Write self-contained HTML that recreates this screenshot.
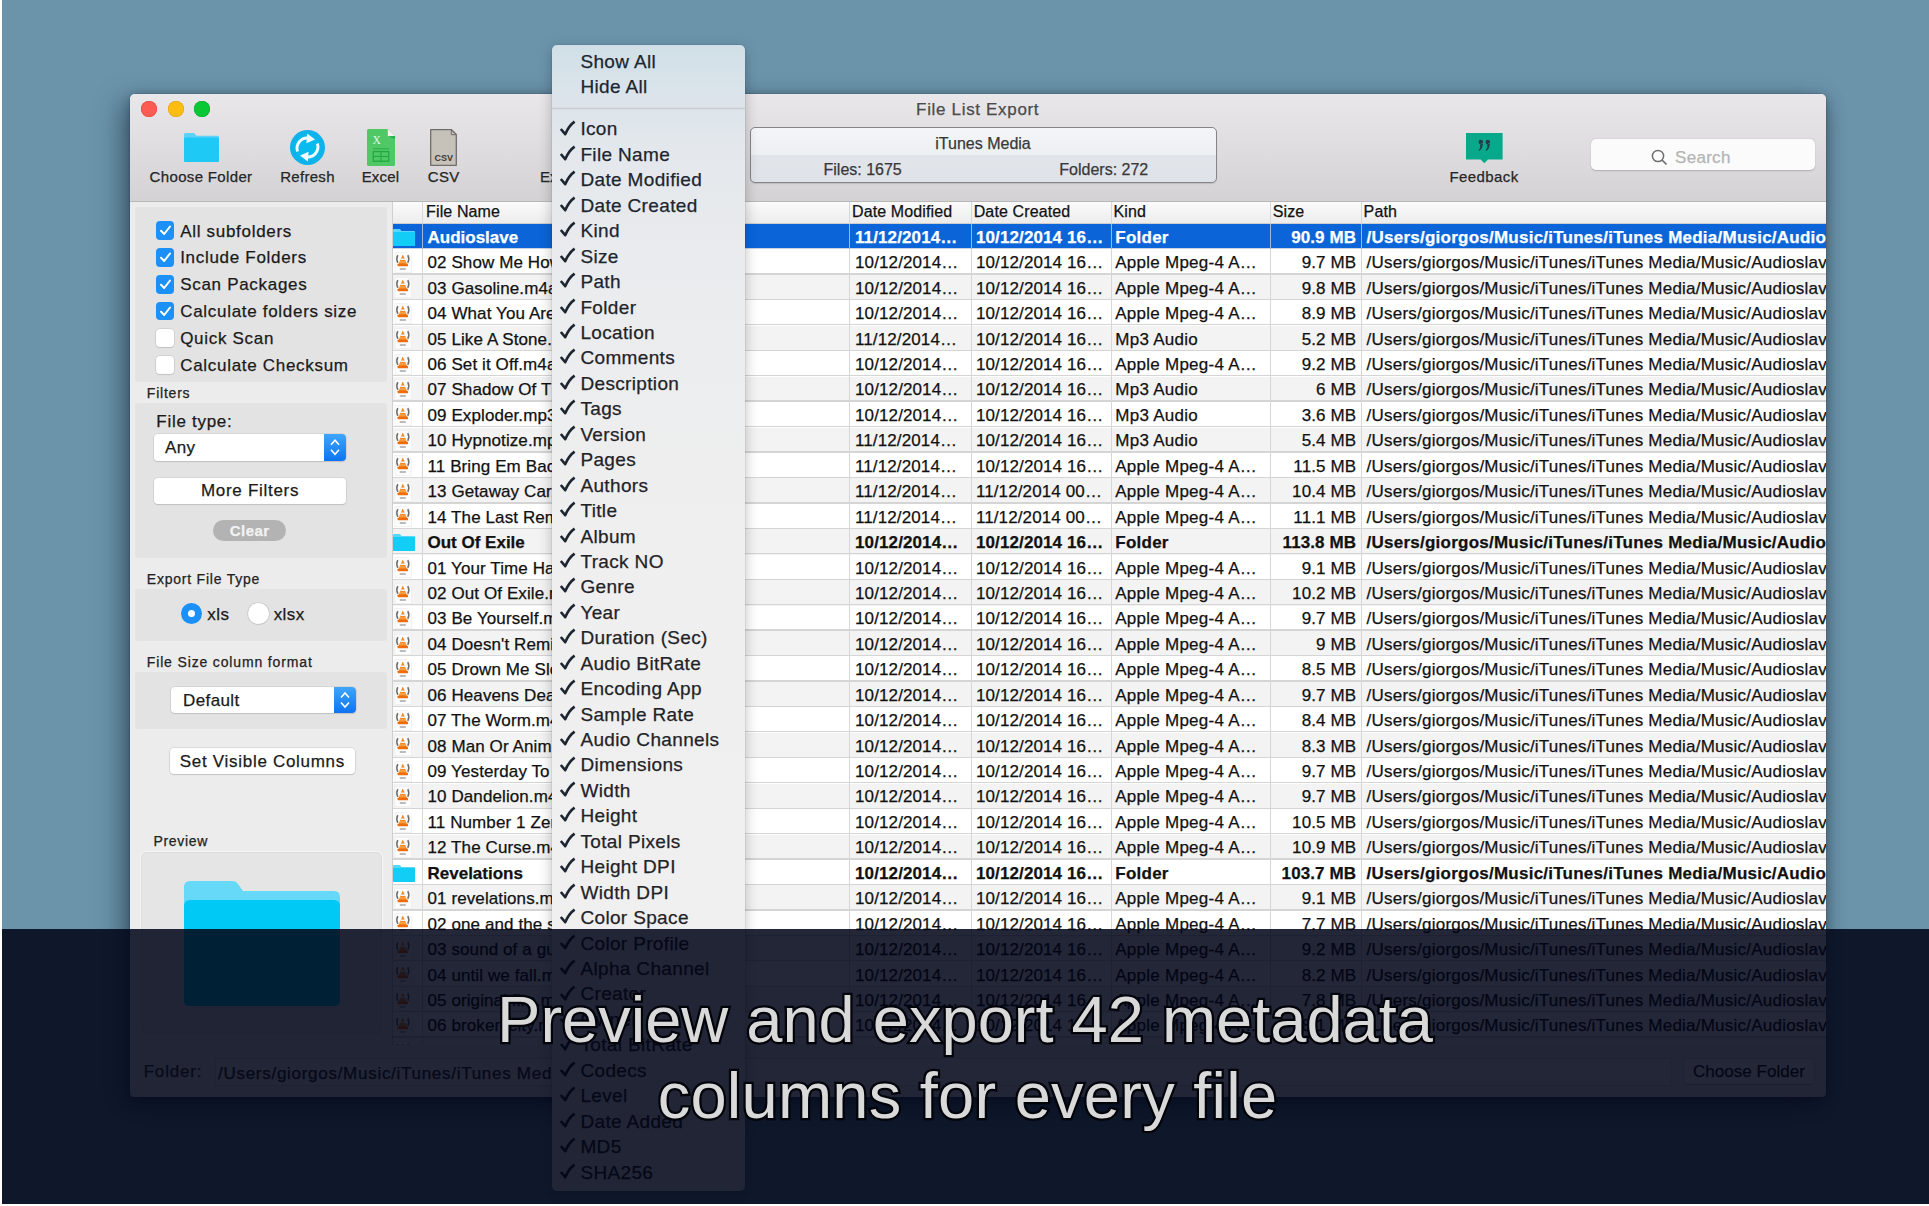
<!DOCTYPE html><html><head><meta charset="utf-8"><style>
*{margin:0;padding:0;box-sizing:border-box}
html,body{width:1929px;height:1206px;overflow:hidden;background:#6b94ab;font-family:"Liberation Sans", sans-serif;}
.a{position:absolute}
.t{position:absolute;white-space:pre;font-family:"Liberation Sans", sans-serif;-webkit-text-stroke:0.25px currentColor}
svg{position:absolute;overflow:visible}
</style></head><body><div class="a" style="left:130px;top:94px;width:1696px;height:1003px;background:#ececec;border-radius:5px 5px 4px 4px;box-shadow:0 0 0 0.5px rgba(40,60,80,.35),-10px 8px 28px rgba(20,40,60,.38), 0 2px 10px rgba(0,0,0,.22), 0 10px 22px rgba(0,0,0,.25);"></div>
<div class="a" style="left:130px;top:94px;width:1696px;height:108px;border-radius:5px 5px 0 0;background:linear-gradient(#e9e7e9,#d4d2d4);border-bottom:1px solid #b9b7b9;"></div>
<div class="a" style="left:140.7px;top:100.5px;width:16px;height:16px;border-radius:50%;background:#fd5c55;box-shadow:inset 0 0 0 0.5px #e0443e;"></div>
<div class="a" style="left:167.7px;top:100.5px;width:16px;height:16px;border-radius:50%;background:#fdbd10;box-shadow:inset 0 0 0 0.5px #dea123;"></div>
<div class="a" style="left:194.2px;top:100.5px;width:16px;height:16px;border-radius:50%;background:#08c835;box-shadow:inset 0 0 0 0.5px #0aa82a;"></div>
<div class="t" style="left:977.7px;top:101.01px;font-size:17px;line-height:17px;color:#4b4b4b;letter-spacing:0.67px;transform:translateX(-50%);">File List Export</div>
<svg style="left:183px;top:132px" width="37" height="31" viewBox="0 0 37 31"><path d="M1 2.5 Q1 1 2.5 1 H11 L13.5 3.8 H34.5 Q36 3.8 36 5.3 V28.5 Q36 30 34.5 30 H2.5 Q1 30 1 28.5 Z" fill="#5ad3f7"/><path d="M1 7 Q1 5.5 2.5 5.5 H34.5 Q36 5.5 36 7 V28.5 Q36 30 34.5 30 H2.5 Q1 30 1 28.5 Z" fill="#1ec9f5"/></svg>
<div class="t" style="left:201px;top:169.20px;font-size:15px;line-height:15px;color:#262626;letter-spacing:0.34px;transform:translateX(-50%);">Choose Folder</div>
<svg style="left:290px;top:130px" width="35" height="35" viewBox="0 0 35 35"><circle cx="17.5" cy="17.5" r="17.5" fill="#0fb2ea"/><circle cx="17.5" cy="17.5" r="13" fill="#08bbef"/><path d="M7.6 21.5 A10.3 10.3 0 0 1 18.5 8" stroke="#effbfe" stroke-width="2.9" fill="none"/><path d="M17.2 3.6 L25 9.4 L16.4 13.2 Z" fill="#effbfe"/><path d="M27.4 13.5 A10.3 10.3 0 0 1 16.5 27" stroke="#effbfe" stroke-width="2.9" fill="none"/><path d="M17.8 31.4 L10 25.6 L18.6 21.8 Z" fill="#effbfe"/></svg>
<div class="t" style="left:307.5px;top:169.20px;font-size:15px;line-height:15px;color:#262626;letter-spacing:0.29px;transform:translateX(-50%);">Refresh</div>
<svg style="left:367px;top:129.2px" width="28" height="37" viewBox="0 0 28 37"><path d="M1.5 0 H20.8 L28 7.3 V35.5 Q28 37 26.5 37 H1.5 Q0 37 0 35.5 V1.5 Q0 0 1.5 0Z" fill="#50c865"/><path d="M20.8 0 L28 7.3 H20.8Z" fill="#f2f2f2"/><path d="M20.8 7.3 H28 V9.8Z" fill="#1fa843"/><text x="5.5" y="15" font-family="Liberation Serif" font-size="11.5" fill="#e4f6e6">X</text><rect x="6" y="19.2" width="16" height="1.1" fill="#2fae4a"/><rect x="6.3" y="22.6" width="15.4" height="9.6" fill="none" stroke="#22a83f" stroke-width="1.3"/><rect x="13.5" y="22.6" width="1.1" height="9.6" fill="#22a83f"/><rect x="6.3" y="26.9" width="15.4" height="1.1" fill="#22a83f"/></svg>
<div class="t" style="left:380.5px;top:169.20px;font-size:15px;line-height:15px;color:#262626;letter-spacing:0.2px;transform:translateX(-50%);">Excel</div>
<svg style="left:430px;top:129.2px" width="27" height="37" viewBox="0 0 27 37"><path d="M0.7 0.7 H21.5 L26.3 5.5 V36.3 H0.7Z" fill="#c6c1b9" stroke="#6f6d6a" stroke-width="1.3" stroke-linejoin="round"/><path d="M21.3 0.9 V5.7 H26.1" fill="none" stroke="#6f6d6a" stroke-width="1"/><text x="13.7" y="32" text-anchor="middle" font-family="Liberation Sans" font-weight="bold" font-size="9" fill="#3c3b39">CSV</text></svg>
<div class="t" style="left:443.7px;top:169.20px;font-size:15px;line-height:15px;color:#262626;letter-spacing:0.3px;transform:translateX(-50%);">CSV</div>
<div class="t" style="left:540px;top:169.20px;font-size:15px;line-height:15px;color:#262626;">Ex</div>
<div class="a" style="left:750px;top:126.5px;width:467px;height:56.8px;border-radius:5px;border:1.3px solid #858587;background:linear-gradient(#f3f5f7 0%,#edf0f3 50%,#e1e5ea 51%,#dfe3e9 100%);box-shadow:0 1px 1px rgba(0,0,0,.12);"></div>
<div class="t" style="left:983px;top:135.56px;font-size:16px;line-height:16px;color:#383838;transform:translateX(-50%);">iTunes Media</div>
<div class="t" style="left:823.5px;top:162.46px;font-size:16px;line-height:16px;color:#383838;">Files: 1675</div>
<div class="t" style="left:1059.3px;top:162.46px;font-size:16px;line-height:16px;color:#383838;">Folders: 272</div>
<svg style="left:1465.6px;top:132.8px" width="37" height="31" viewBox="0 0 37 31"><path d="M0 0 H36.6 V26.5 H22 L18.3 30.3 L14.6 26.5 H0Z" fill="#08a98a"/><path d="M14.8 9 m-2.3 0 a2.3 2.3 0 1 0 4.6 0 a2.3 2.3 0 1 0 -4.6 0 M17 9.5 Q17 15.5 13.2 18 L12.6 17.3 Q14.8 14.8 14.3 11.2Z" fill="#1d3e4a"/><path d="M21.8 9 m-2.3 0 a2.3 2.3 0 1 0 4.6 0 a2.3 2.3 0 1 0 -4.6 0 M24 9.5 Q24 15.5 20.2 18 L19.6 17.3 Q21.8 14.8 21.3 11.2Z" fill="#1d3e4a"/></svg>
<div class="t" style="left:1484px;top:169.40px;font-size:15px;line-height:15px;color:#262626;letter-spacing:0.42px;transform:translateX(-50%);">Feedback</div>
<div class="a" style="left:1591px;top:139.3px;width:224px;height:31px;border-radius:5px;background:#fbfbfb;box-shadow:0 0.5px 1.5px rgba(0,0,0,.2);"></div>
<svg style="left:1650.5px;top:149px" width="18" height="18" viewBox="0 0 18 18"><circle cx="7" cy="7" r="5.6" stroke="#6e6e6e" stroke-width="1.5" fill="none"/><path d="M11 11 L15.5 15.5" stroke="#6e6e6e" stroke-width="1.7"/></svg>
<div class="t" style="left:1675px;top:148.61px;font-size:17px;line-height:17px;color:#b4b4b4;letter-spacing:0.3px;">Search</div>
<div class="a" style="left:135.4px;top:207px;width:251.2px;height:174.6px;background:#e3e3e3;border-radius:3px;"></div>
<div class="a" style="left:135.4px;top:402.5px;width:251.2px;height:155.5px;background:#e3e3e3;border-radius:3px;"></div>
<div class="a" style="left:135.4px;top:589px;width:251.2px;height:52px;background:#e3e3e3;border-radius:3px;"></div>
<div class="a" style="left:135.4px;top:671.7px;width:251.2px;height:57px;background:#e3e3e3;border-radius:3px;"></div>
<div class="a" style="left:155.5px;top:221.3px;width:18.6px;height:18.6px;border-radius:4px;background:#1a90f8;"></div>
<svg style="left:155.5px;top:221.3px" width="19" height="19" viewBox="0 0 19 19"><path d="M5 9.8 L8.2 13 L14 5.5" stroke="#fff" stroke-width="2" fill="none" stroke-linecap="round" stroke-linejoin="round"/></svg>
<div class="t" style="left:180.2px;top:222.51px;font-size:17px;line-height:17px;color:#1a1a1a;letter-spacing:0.7px;">All subfolders</div>
<div class="a" style="left:155.5px;top:248.14000000000001px;width:18.6px;height:18.6px;border-radius:4px;background:#1a90f8;"></div>
<svg style="left:155.5px;top:248.14000000000001px" width="19" height="19" viewBox="0 0 19 19"><path d="M5 9.8 L8.2 13 L14 5.5" stroke="#fff" stroke-width="2" fill="none" stroke-linecap="round" stroke-linejoin="round"/></svg>
<div class="t" style="left:180.2px;top:249.35px;font-size:17px;line-height:17px;color:#1a1a1a;letter-spacing:0.7px;">Include Folders</div>
<div class="a" style="left:155.5px;top:274.98px;width:18.6px;height:18.6px;border-radius:4px;background:#1a90f8;"></div>
<svg style="left:155.5px;top:274.98px" width="19" height="19" viewBox="0 0 19 19"><path d="M5 9.8 L8.2 13 L14 5.5" stroke="#fff" stroke-width="2" fill="none" stroke-linecap="round" stroke-linejoin="round"/></svg>
<div class="t" style="left:180.2px;top:276.19px;font-size:17px;line-height:17px;color:#1a1a1a;letter-spacing:0.7px;">Scan Packages</div>
<div class="a" style="left:155.5px;top:301.82px;width:18.6px;height:18.6px;border-radius:4px;background:#1a90f8;"></div>
<svg style="left:155.5px;top:301.82px" width="19" height="19" viewBox="0 0 19 19"><path d="M5 9.8 L8.2 13 L14 5.5" stroke="#fff" stroke-width="2" fill="none" stroke-linecap="round" stroke-linejoin="round"/></svg>
<div class="t" style="left:180.2px;top:303.03px;font-size:17px;line-height:17px;color:#1a1a1a;letter-spacing:0.7px;">Calculate folders size</div>
<div class="a" style="left:155.5px;top:328.66px;width:18.6px;height:18.6px;border-radius:4px;background:#fff;box-shadow:0 0 0 0.6px #c4c4c4, 0 0.6px 1px rgba(0,0,0,.15);"></div>
<div class="t" style="left:180.2px;top:329.87px;font-size:17px;line-height:17px;color:#1a1a1a;letter-spacing:0.7px;">Quick Scan</div>
<div class="a" style="left:155.5px;top:355.5px;width:18.6px;height:18.6px;border-radius:4px;background:#fff;box-shadow:0 0 0 0.6px #c4c4c4, 0 0.6px 1px rgba(0,0,0,.15);"></div>
<div class="t" style="left:180.2px;top:356.71px;font-size:17px;line-height:17px;color:#1a1a1a;letter-spacing:0.7px;">Calculate Checksum</div>
<div class="t" style="left:146.8px;top:385.85px;font-size:14px;line-height:14px;color:#222;letter-spacing:0.78px;">Filters</div>
<div class="t" style="left:156.3px;top:412.91px;font-size:17px;line-height:17px;color:#1a1a1a;letter-spacing:0.72px;">File type:</div>
<div class="a" style="left:154.1px;top:434.4px;width:191.9px;height:26.5px;border-radius:4px;background:#fff;box-shadow:0 0 0 0.6px #c8c8c8, 0 1px 1px rgba(0,0,0,.18);"></div>
<div class="a" style="left:324.0px;top:434.4px;width:22px;height:26.5px;border-radius:0 4px 4px 0;background:linear-gradient(#3ea6fa,#0d74f3);"></div>
<svg style="left:324.0px;top:434.4px" width="22" height="26.5" viewBox="0 0 22 26.5"><path d="M7 10.75 L11 6.25 L15 10.75" stroke="#fff" stroke-width="1.6" fill="none"/><path d="M7 15.75 L11 20.25 L15 15.75" stroke="#fff" stroke-width="1.6" fill="none"/></svg>
<div class="t" style="left:165px;top:439.41px;font-size:17px;line-height:17px;color:#1a1a1a;letter-spacing:0.4px;">Any</div>
<div class="a" style="left:154.1px;top:478.2px;width:191.9px;height:25.8px;border-radius:4px;background:#fff;box-shadow:0 0 0 0.6px #c8c8c8, 0 1px 1px rgba(0,0,0,.18);"></div>
<div class="t" style="left:250.05px;top:481.91px;font-size:17px;line-height:17px;color:#1a1a1a;letter-spacing:0.7px;transform:translateX(-50%);">More Filters</div>
<div class="a" style="left:213px;top:520px;width:73.3px;height:20.7px;border-radius:10.5px;background:#b3b3b3;"></div>
<div class="t" style="left:249.7px;top:522.80px;font-size:15px;line-height:15px;color:#f2f2f2;font-weight:bold;letter-spacing:0.45px;transform:translateX(-50%);">Clear</div>
<div class="t" style="left:146.8px;top:572.35px;font-size:14px;line-height:14px;color:#222;letter-spacing:0.78px;">Export File Type</div>
<div class="a" style="left:181px;top:603px;width:21px;height:21px;border-radius:50%;background:#1a90f8;"></div>
<div class="a" style="left:188px;top:610px;width:7px;height:7px;border-radius:50%;background:#fff;"></div>
<div class="t" style="left:207.2px;top:605.81px;font-size:17px;line-height:17px;color:#1a1a1a;letter-spacing:0.5px;">xls</div>
<div class="a" style="left:248.2px;top:603px;width:20.6px;height:20.6px;border-radius:50%;background:#fff;box-shadow:0 0 0 0.6px #c4c4c4, 0 0.6px 1px rgba(0,0,0,.15);"></div>
<div class="t" style="left:273.7px;top:605.81px;font-size:17px;line-height:17px;color:#1a1a1a;letter-spacing:0.4px;">xlsx</div>
<div class="t" style="left:146.8px;top:655.35px;font-size:14px;line-height:14px;color:#222;letter-spacing:0.85px;">File Size column format</div>
<div class="a" style="left:171.4px;top:686.7px;width:184.3px;height:26px;border-radius:4px;background:#fff;box-shadow:0 0 0 0.6px #c8c8c8, 0 1px 1px rgba(0,0,0,.18);"></div>
<div class="a" style="left:333.70000000000005px;top:686.7px;width:22px;height:26px;border-radius:0 4px 4px 0;background:linear-gradient(#3ea6fa,#0d74f3);"></div>
<svg style="left:333.70000000000005px;top:686.7px" width="22" height="26" viewBox="0 0 22 26"><path d="M7 10.5 L11 6.0 L15 10.5" stroke="#fff" stroke-width="1.6" fill="none"/><path d="M7 15.5 L11 20.0 L15 15.5" stroke="#fff" stroke-width="1.6" fill="none"/></svg>
<div class="t" style="left:183px;top:691.61px;font-size:17px;line-height:17px;color:#1a1a1a;letter-spacing:0.4px;">Default</div>
<div class="a" style="left:169.8px;top:747.8px;width:185.2px;height:25.8px;border-radius:4px;background:#fff;box-shadow:0 0 0 0.6px #c8c8c8, 0 1px 1px rgba(0,0,0,.18);"></div>
<div class="t" style="left:262.4px;top:752.51px;font-size:17px;line-height:17px;color:#1a1a1a;letter-spacing:0.7px;transform:translateX(-50%);">Set Visible Columns</div>
<div class="t" style="left:153.5px;top:834.45px;font-size:14px;line-height:14px;color:#222;letter-spacing:0.67px;">Preview</div>
<div class="a" style="left:140.6px;top:852px;width:241.2px;height:182px;border-radius:6px;background:#e5e5e5;box-shadow:0 0 0 1px #f6f6f6, inset 0 0 0 1px #dcdcdc;"></div>
<svg style="left:184px;top:881px" width="156" height="125" viewBox="0 0 156 125"><path d="M0 6 Q0 0 6 0 H48 Q52 0 54 3 L59 10 H150 Q156 10 156 16 V119 Q156 125 150 125 H6 Q0 125 0 119Z" fill="#66d9f8"/><path d="M0 25 Q0 19 6 19 H150 Q156 19 156 25 V119 Q156 125 150 125 H6 Q0 125 0 119Z" fill="#00c9f6"/></svg>
<div class="t" style="left:143.7px;top:1062.91px;font-size:17px;line-height:17px;color:#3a3a3a;letter-spacing:0.8px;">Folder:</div>
<div class="a" style="left:215.9px;top:1059px;width:1455px;height:25.5px;background:#f4f4f4;box-shadow:0 0 0 0.6px #c8c8c8;"></div>
<div class="t" style="left:218px;top:1065.31px;font-size:17px;line-height:17px;color:#2a2a2a;letter-spacing:0.72px;">/Users/giorgos/Music/iTunes/iTunes Media/Music/Audioslave</div>
<div class="a" style="left:1684px;top:1059px;width:130px;height:24.5px;border-radius:4px;background:#fff;box-shadow:0 0 0 0.6px #c8c8c8, 0 1px 1px rgba(0,0,0,.18);"></div>
<div class="t" style="left:1749px;top:1062.91px;font-size:17px;line-height:17px;color:#1a1a1a;letter-spacing:0.05px;transform:translateX(-50%);">Choose Folder</div>
<div class="a" style="left:391.6px;top:202px;width:1434.4px;height:843px;background:#fff;overflow:hidden;">
<div class="a" style="left:0px;top:0px;width:1434.4px;height:22px;background:linear-gradient(#fbfbfb,#ececec);border-bottom:1px solid #cdcdcd;"></div>
<div class="a" style="left:30.399999999999977px;top:0px;width:1px;height:22px;background:#d7d7d7;"></div>
<div class="a" style="left:457.9px;top:0px;width:1px;height:22px;background:#d7d7d7;"></div>
<div class="a" style="left:579.6px;top:0px;width:1px;height:22px;background:#d7d7d7;"></div>
<div class="a" style="left:719.4px;top:0px;width:1px;height:22px;background:#d7d7d7;"></div>
<div class="a" style="left:878.6999999999999px;top:0px;width:1px;height:22px;background:#d7d7d7;"></div>
<div class="a" style="left:969.4999999999999px;top:0px;width:1px;height:22px;background:#d7d7d7;"></div>
<div class="t" style="left:34.49999999999998px;top:2.26px;font-size:16px;line-height:16px;color:#111;letter-spacing:0.12px;">File Name</div>
<div class="t" style="left:460.4px;top:2.26px;font-size:16px;line-height:16px;color:#111;letter-spacing:0.12px;">Date Modified</div>
<div class="t" style="left:582.1px;top:2.26px;font-size:16px;line-height:16px;color:#111;letter-spacing:0.12px;">Date Created</div>
<div class="t" style="left:721.9px;top:2.26px;font-size:16px;line-height:16px;color:#111;letter-spacing:0.12px;">Kind</div>
<div class="t" style="left:881.1999999999999px;top:2.26px;font-size:16px;line-height:16px;color:#111;letter-spacing:0.12px;">Size</div>
<div class="t" style="left:971.9999999999999px;top:2.26px;font-size:16px;line-height:16px;color:#111;letter-spacing:0.12px;">Path</div>
<div class="a" style="left:0px;top:22.0px;width:1434.4px;height:25.44px;background:#0b65d9;"></div>
<div class="a" style="left:0px;top:45.839999999999996px;width:1434.4px;height:1.3px;background:#c9d3e0;"></div>
<div class="a" style="left:30.399999999999977px;top:22.0px;width:1px;height:25.44px;background:#9fb8dc;"></div>
<div class="a" style="left:457.9px;top:22.0px;width:1px;height:25.44px;background:#9fb8dc;"></div>
<div class="a" style="left:579.6px;top:22.0px;width:1px;height:25.44px;background:#9fb8dc;"></div>
<div class="a" style="left:719.4px;top:22.0px;width:1px;height:25.44px;background:#9fb8dc;"></div>
<div class="a" style="left:878.6999999999999px;top:22.0px;width:1px;height:25.44px;background:#9fb8dc;"></div>
<div class="a" style="left:969.4999999999999px;top:22.0px;width:1px;height:25.44px;background:#9fb8dc;"></div>
<svg style="left:1px;top:26.5px" width="22" height="17" viewBox="0 0 22 17"><path d="M0 1 Q0 0 1 0 H7 L8.5 2 H21 Q22 2 22 3 V16 Q22 17 21 17 H1 Q0 17 0 16Z" fill="#5ad6f8"/><path d="M0 4 Q0 3 1 3 H21 Q22 3 22 4 V16 Q22 17 21 17 H1 Q0 17 0 16Z" fill="#12cdf6"/></svg>
<div class="a" style="left:30.899999999999977px;top:22.0px;width:427.5px;height:25.44px;overflow:hidden"><div class="t" style="left:5px;top:4.81px;font-size:17px;line-height:17px;color:#fff;font-weight:bold;">Audioslave</div></div>
<div class="t" style="left:463.4px;top:26.81px;font-size:17px;line-height:17px;color:#fff;font-weight:bold;letter-spacing:0.12px;">11/12/2014…</div>
<div class="t" style="left:584.3000000000001px;top:26.81px;font-size:17px;line-height:17px;color:#fff;font-weight:bold;letter-spacing:0.12px;">10/12/2014 16…</div>
<div class="t" style="left:723.6999999999999px;top:26.81px;font-size:17px;line-height:17px;color:#fff;font-weight:bold;letter-spacing:0.25px;">Folder</div>
<div class="t" style="left:964.4999999999999px;top:26.81px;font-size:17px;line-height:17px;color:#fff;font-weight:bold;letter-spacing:0.1px;transform:translateX(-100%);">90.9 MB</div>
<div class="a" style="left:969.9999999999999px;top:22.0px;width:464.4000000000001px;height:25.44px;overflow:hidden"><div class="t" style="left:5px;top:4.81px;font-size:17px;line-height:17px;color:#fff;font-weight:bold;letter-spacing:0.24px;">/Users/giorgos/Music/iTunes/iTunes Media/Music/Audioslave</div></div>
<div class="a" style="left:0px;top:47.44px;width:1434.4px;height:25.44px;background:#ffffff;"></div>
<div class="a" style="left:0px;top:71.28px;width:1434.4px;height:1.3px;background:#d5d5d5;"></div>
<div class="a" style="left:30.399999999999977px;top:47.44px;width:1px;height:25.44px;background:#d6d6d6;"></div>
<div class="a" style="left:457.9px;top:47.44px;width:1px;height:25.44px;background:#d6d6d6;"></div>
<div class="a" style="left:579.6px;top:47.44px;width:1px;height:25.44px;background:#d6d6d6;"></div>
<div class="a" style="left:719.4px;top:47.44px;width:1px;height:25.44px;background:#d6d6d6;"></div>
<div class="a" style="left:878.6999999999999px;top:47.44px;width:1px;height:25.44px;background:#d6d6d6;"></div>
<div class="a" style="left:969.4999999999999px;top:47.44px;width:1px;height:25.44px;background:#d6d6d6;"></div>
<svg style="left:1.5px;top:49.94px" width="20" height="21" viewBox="0 0 20 21"><path d="M2 0.5 H14 L18.5 5 V20.5 H2Z" fill="#fcfcfc" stroke="#ececec" stroke-width="0.7"/><path d="M4.8 3.2 Q2.8 7 4.8 10.8" stroke="#6e6e6e" stroke-width="1.5" fill="none"/><path d="M14.8 3.2 Q16.8 7 14.8 10.8" stroke="#6e6e6e" stroke-width="1.5" fill="none"/><path d="M9.8 2.6 L14.2 12.6 H5.4Z" fill="#f7861c"/><rect x="4.6" y="11.8" width="10.4" height="2.4" rx="0.4" fill="#ef6c0c"/><path d="M7.9 6.6 H11.7 L12.3 8.1 H7.3Z" fill="#e9f6fb"/><path d="M6.9 9.4 H12.7 L13.2 10.5 H6.4Z" fill="#f9b36a"/><rect x="6.8" y="16.3" width="6" height="1.4" fill="#a0a0a0"/></svg>
<div class="a" style="left:30.899999999999977px;top:47.44px;width:427.5px;height:25.44px;overflow:hidden"><div class="t" style="left:5px;top:4.81px;font-size:17px;line-height:17px;color:#111;letter-spacing:0.1px;">02 Show Me How to Live.m4a</div></div>
<div class="t" style="left:463.4px;top:52.25px;font-size:17px;line-height:17px;color:#111;letter-spacing:0.12px;">10/12/2014…</div>
<div class="t" style="left:584.3000000000001px;top:52.25px;font-size:17px;line-height:17px;color:#111;letter-spacing:0.12px;">10/12/2014 16…</div>
<div class="t" style="left:723.6999999999999px;top:52.25px;font-size:17px;line-height:17px;color:#111;letter-spacing:0.25px;">Apple Mpeg-4 A…</div>
<div class="t" style="left:964.4999999999999px;top:52.25px;font-size:17px;line-height:17px;color:#111;letter-spacing:0.1px;transform:translateX(-100%);">9.7 MB</div>
<div class="a" style="left:969.9999999999999px;top:47.44px;width:464.4000000000001px;height:25.44px;overflow:hidden"><div class="t" style="left:5px;top:4.81px;font-size:17px;line-height:17px;color:#111;letter-spacing:0.23px;">/Users/giorgos/Music/iTunes/iTunes Media/Music/Audioslave/Audioslave/01.m4a</div></div>
<div class="a" style="left:0px;top:72.88px;width:1434.4px;height:25.44px;background:#f3f3f3;"></div>
<div class="a" style="left:0px;top:96.72px;width:1434.4px;height:1.3px;background:#d5d5d5;"></div>
<div class="a" style="left:30.399999999999977px;top:72.88px;width:1px;height:25.44px;background:#d6d6d6;"></div>
<div class="a" style="left:457.9px;top:72.88px;width:1px;height:25.44px;background:#d6d6d6;"></div>
<div class="a" style="left:579.6px;top:72.88px;width:1px;height:25.44px;background:#d6d6d6;"></div>
<div class="a" style="left:719.4px;top:72.88px;width:1px;height:25.44px;background:#d6d6d6;"></div>
<div class="a" style="left:878.6999999999999px;top:72.88px;width:1px;height:25.44px;background:#d6d6d6;"></div>
<div class="a" style="left:969.4999999999999px;top:72.88px;width:1px;height:25.44px;background:#d6d6d6;"></div>
<svg style="left:1.5px;top:75.38px" width="20" height="21" viewBox="0 0 20 21"><path d="M2 0.5 H14 L18.5 5 V20.5 H2Z" fill="#fcfcfc" stroke="#ececec" stroke-width="0.7"/><path d="M4.8 3.2 Q2.8 7 4.8 10.8" stroke="#6e6e6e" stroke-width="1.5" fill="none"/><path d="M14.8 3.2 Q16.8 7 14.8 10.8" stroke="#6e6e6e" stroke-width="1.5" fill="none"/><path d="M9.8 2.6 L14.2 12.6 H5.4Z" fill="#f7861c"/><rect x="4.6" y="11.8" width="10.4" height="2.4" rx="0.4" fill="#ef6c0c"/><path d="M7.9 6.6 H11.7 L12.3 8.1 H7.3Z" fill="#e9f6fb"/><path d="M6.9 9.4 H12.7 L13.2 10.5 H6.4Z" fill="#f9b36a"/><rect x="6.8" y="16.3" width="6" height="1.4" fill="#a0a0a0"/></svg>
<div class="a" style="left:30.899999999999977px;top:72.88px;width:427.5px;height:25.44px;overflow:hidden"><div class="t" style="left:5px;top:4.81px;font-size:17px;line-height:17px;color:#111;letter-spacing:0.1px;">03 Gasoline.m4a</div></div>
<div class="t" style="left:463.4px;top:77.69px;font-size:17px;line-height:17px;color:#111;letter-spacing:0.12px;">10/12/2014…</div>
<div class="t" style="left:584.3000000000001px;top:77.69px;font-size:17px;line-height:17px;color:#111;letter-spacing:0.12px;">10/12/2014 16…</div>
<div class="t" style="left:723.6999999999999px;top:77.69px;font-size:17px;line-height:17px;color:#111;letter-spacing:0.25px;">Apple Mpeg-4 A…</div>
<div class="t" style="left:964.4999999999999px;top:77.69px;font-size:17px;line-height:17px;color:#111;letter-spacing:0.1px;transform:translateX(-100%);">9.8 MB</div>
<div class="a" style="left:969.9999999999999px;top:72.88px;width:464.4000000000001px;height:25.44px;overflow:hidden"><div class="t" style="left:5px;top:4.81px;font-size:17px;line-height:17px;color:#111;letter-spacing:0.23px;">/Users/giorgos/Music/iTunes/iTunes Media/Music/Audioslave/Audioslave/01.m4a</div></div>
<div class="a" style="left:0px;top:98.32000000000001px;width:1434.4px;height:25.44px;background:#ffffff;"></div>
<div class="a" style="left:0px;top:122.16000000000001px;width:1434.4px;height:1.3px;background:#d5d5d5;"></div>
<div class="a" style="left:30.399999999999977px;top:98.32000000000001px;width:1px;height:25.44px;background:#d6d6d6;"></div>
<div class="a" style="left:457.9px;top:98.32000000000001px;width:1px;height:25.44px;background:#d6d6d6;"></div>
<div class="a" style="left:579.6px;top:98.32000000000001px;width:1px;height:25.44px;background:#d6d6d6;"></div>
<div class="a" style="left:719.4px;top:98.32000000000001px;width:1px;height:25.44px;background:#d6d6d6;"></div>
<div class="a" style="left:878.6999999999999px;top:98.32000000000001px;width:1px;height:25.44px;background:#d6d6d6;"></div>
<div class="a" style="left:969.4999999999999px;top:98.32000000000001px;width:1px;height:25.44px;background:#d6d6d6;"></div>
<svg style="left:1.5px;top:100.82000000000001px" width="20" height="21" viewBox="0 0 20 21"><path d="M2 0.5 H14 L18.5 5 V20.5 H2Z" fill="#fcfcfc" stroke="#ececec" stroke-width="0.7"/><path d="M4.8 3.2 Q2.8 7 4.8 10.8" stroke="#6e6e6e" stroke-width="1.5" fill="none"/><path d="M14.8 3.2 Q16.8 7 14.8 10.8" stroke="#6e6e6e" stroke-width="1.5" fill="none"/><path d="M9.8 2.6 L14.2 12.6 H5.4Z" fill="#f7861c"/><rect x="4.6" y="11.8" width="10.4" height="2.4" rx="0.4" fill="#ef6c0c"/><path d="M7.9 6.6 H11.7 L12.3 8.1 H7.3Z" fill="#e9f6fb"/><path d="M6.9 9.4 H12.7 L13.2 10.5 H6.4Z" fill="#f9b36a"/><rect x="6.8" y="16.3" width="6" height="1.4" fill="#a0a0a0"/></svg>
<div class="a" style="left:30.899999999999977px;top:98.32000000000001px;width:427.5px;height:25.44px;overflow:hidden"><div class="t" style="left:5px;top:4.81px;font-size:17px;line-height:17px;color:#111;letter-spacing:0.1px;">04 What You Are.m4a</div></div>
<div class="t" style="left:463.4px;top:103.13px;font-size:17px;line-height:17px;color:#111;letter-spacing:0.12px;">10/12/2014…</div>
<div class="t" style="left:584.3000000000001px;top:103.13px;font-size:17px;line-height:17px;color:#111;letter-spacing:0.12px;">10/12/2014 16…</div>
<div class="t" style="left:723.6999999999999px;top:103.13px;font-size:17px;line-height:17px;color:#111;letter-spacing:0.25px;">Apple Mpeg-4 A…</div>
<div class="t" style="left:964.4999999999999px;top:103.13px;font-size:17px;line-height:17px;color:#111;letter-spacing:0.1px;transform:translateX(-100%);">8.9 MB</div>
<div class="a" style="left:969.9999999999999px;top:98.32000000000001px;width:464.4000000000001px;height:25.44px;overflow:hidden"><div class="t" style="left:5px;top:4.81px;font-size:17px;line-height:17px;color:#111;letter-spacing:0.23px;">/Users/giorgos/Music/iTunes/iTunes Media/Music/Audioslave/Audioslave/01.m4a</div></div>
<div class="a" style="left:0px;top:123.76px;width:1434.4px;height:25.44px;background:#f3f3f3;"></div>
<div class="a" style="left:0px;top:147.60000000000002px;width:1434.4px;height:1.3px;background:#d5d5d5;"></div>
<div class="a" style="left:30.399999999999977px;top:123.76px;width:1px;height:25.44px;background:#d6d6d6;"></div>
<div class="a" style="left:457.9px;top:123.76px;width:1px;height:25.44px;background:#d6d6d6;"></div>
<div class="a" style="left:579.6px;top:123.76px;width:1px;height:25.44px;background:#d6d6d6;"></div>
<div class="a" style="left:719.4px;top:123.76px;width:1px;height:25.44px;background:#d6d6d6;"></div>
<div class="a" style="left:878.6999999999999px;top:123.76px;width:1px;height:25.44px;background:#d6d6d6;"></div>
<div class="a" style="left:969.4999999999999px;top:123.76px;width:1px;height:25.44px;background:#d6d6d6;"></div>
<svg style="left:1.5px;top:126.26px" width="20" height="21" viewBox="0 0 20 21"><path d="M2 0.5 H14 L18.5 5 V20.5 H2Z" fill="#fcfcfc" stroke="#ececec" stroke-width="0.7"/><path d="M4.8 3.2 Q2.8 7 4.8 10.8" stroke="#6e6e6e" stroke-width="1.5" fill="none"/><path d="M14.8 3.2 Q16.8 7 14.8 10.8" stroke="#6e6e6e" stroke-width="1.5" fill="none"/><path d="M9.8 2.6 L14.2 12.6 H5.4Z" fill="#f7861c"/><rect x="4.6" y="11.8" width="10.4" height="2.4" rx="0.4" fill="#ef6c0c"/><path d="M7.9 6.6 H11.7 L12.3 8.1 H7.3Z" fill="#e9f6fb"/><path d="M6.9 9.4 H12.7 L13.2 10.5 H6.4Z" fill="#f9b36a"/><rect x="6.8" y="16.3" width="6" height="1.4" fill="#a0a0a0"/></svg>
<div class="a" style="left:30.899999999999977px;top:123.76px;width:427.5px;height:25.44px;overflow:hidden"><div class="t" style="left:5px;top:4.81px;font-size:17px;line-height:17px;color:#111;letter-spacing:0.1px;">05 Like A Stone.mp3</div></div>
<div class="t" style="left:463.4px;top:128.57px;font-size:17px;line-height:17px;color:#111;letter-spacing:0.12px;">11/12/2014…</div>
<div class="t" style="left:584.3000000000001px;top:128.57px;font-size:17px;line-height:17px;color:#111;letter-spacing:0.12px;">10/12/2014 16…</div>
<div class="t" style="left:723.6999999999999px;top:128.57px;font-size:17px;line-height:17px;color:#111;letter-spacing:0.25px;">Mp3 Audio</div>
<div class="t" style="left:964.4999999999999px;top:128.57px;font-size:17px;line-height:17px;color:#111;letter-spacing:0.1px;transform:translateX(-100%);">5.2 MB</div>
<div class="a" style="left:969.9999999999999px;top:123.76px;width:464.4000000000001px;height:25.44px;overflow:hidden"><div class="t" style="left:5px;top:4.81px;font-size:17px;line-height:17px;color:#111;letter-spacing:0.23px;">/Users/giorgos/Music/iTunes/iTunes Media/Music/Audioslave/Audioslave/01.m4a</div></div>
<div class="a" style="left:0px;top:149.2px;width:1434.4px;height:25.44px;background:#ffffff;"></div>
<div class="a" style="left:0px;top:173.04px;width:1434.4px;height:1.3px;background:#d5d5d5;"></div>
<div class="a" style="left:30.399999999999977px;top:149.2px;width:1px;height:25.44px;background:#d6d6d6;"></div>
<div class="a" style="left:457.9px;top:149.2px;width:1px;height:25.44px;background:#d6d6d6;"></div>
<div class="a" style="left:579.6px;top:149.2px;width:1px;height:25.44px;background:#d6d6d6;"></div>
<div class="a" style="left:719.4px;top:149.2px;width:1px;height:25.44px;background:#d6d6d6;"></div>
<div class="a" style="left:878.6999999999999px;top:149.2px;width:1px;height:25.44px;background:#d6d6d6;"></div>
<div class="a" style="left:969.4999999999999px;top:149.2px;width:1px;height:25.44px;background:#d6d6d6;"></div>
<svg style="left:1.5px;top:151.7px" width="20" height="21" viewBox="0 0 20 21"><path d="M2 0.5 H14 L18.5 5 V20.5 H2Z" fill="#fcfcfc" stroke="#ececec" stroke-width="0.7"/><path d="M4.8 3.2 Q2.8 7 4.8 10.8" stroke="#6e6e6e" stroke-width="1.5" fill="none"/><path d="M14.8 3.2 Q16.8 7 14.8 10.8" stroke="#6e6e6e" stroke-width="1.5" fill="none"/><path d="M9.8 2.6 L14.2 12.6 H5.4Z" fill="#f7861c"/><rect x="4.6" y="11.8" width="10.4" height="2.4" rx="0.4" fill="#ef6c0c"/><path d="M7.9 6.6 H11.7 L12.3 8.1 H7.3Z" fill="#e9f6fb"/><path d="M6.9 9.4 H12.7 L13.2 10.5 H6.4Z" fill="#f9b36a"/><rect x="6.8" y="16.3" width="6" height="1.4" fill="#a0a0a0"/></svg>
<div class="a" style="left:30.899999999999977px;top:149.2px;width:427.5px;height:25.44px;overflow:hidden"><div class="t" style="left:5px;top:4.81px;font-size:17px;line-height:17px;color:#111;letter-spacing:0.1px;">06 Set it Off.m4a</div></div>
<div class="t" style="left:463.4px;top:154.01px;font-size:17px;line-height:17px;color:#111;letter-spacing:0.12px;">10/12/2014…</div>
<div class="t" style="left:584.3000000000001px;top:154.01px;font-size:17px;line-height:17px;color:#111;letter-spacing:0.12px;">10/12/2014 16…</div>
<div class="t" style="left:723.6999999999999px;top:154.01px;font-size:17px;line-height:17px;color:#111;letter-spacing:0.25px;">Apple Mpeg-4 A…</div>
<div class="t" style="left:964.4999999999999px;top:154.01px;font-size:17px;line-height:17px;color:#111;letter-spacing:0.1px;transform:translateX(-100%);">9.2 MB</div>
<div class="a" style="left:969.9999999999999px;top:149.2px;width:464.4000000000001px;height:25.44px;overflow:hidden"><div class="t" style="left:5px;top:4.81px;font-size:17px;line-height:17px;color:#111;letter-spacing:0.23px;">/Users/giorgos/Music/iTunes/iTunes Media/Music/Audioslave/Audioslave/01.m4a</div></div>
<div class="a" style="left:0px;top:174.64000000000001px;width:1434.4px;height:25.44px;background:#f3f3f3;"></div>
<div class="a" style="left:0px;top:198.48000000000002px;width:1434.4px;height:1.3px;background:#d5d5d5;"></div>
<div class="a" style="left:30.399999999999977px;top:174.64000000000001px;width:1px;height:25.44px;background:#d6d6d6;"></div>
<div class="a" style="left:457.9px;top:174.64000000000001px;width:1px;height:25.44px;background:#d6d6d6;"></div>
<div class="a" style="left:579.6px;top:174.64000000000001px;width:1px;height:25.44px;background:#d6d6d6;"></div>
<div class="a" style="left:719.4px;top:174.64000000000001px;width:1px;height:25.44px;background:#d6d6d6;"></div>
<div class="a" style="left:878.6999999999999px;top:174.64000000000001px;width:1px;height:25.44px;background:#d6d6d6;"></div>
<div class="a" style="left:969.4999999999999px;top:174.64000000000001px;width:1px;height:25.44px;background:#d6d6d6;"></div>
<svg style="left:1.5px;top:177.14000000000001px" width="20" height="21" viewBox="0 0 20 21"><path d="M2 0.5 H14 L18.5 5 V20.5 H2Z" fill="#fcfcfc" stroke="#ececec" stroke-width="0.7"/><path d="M4.8 3.2 Q2.8 7 4.8 10.8" stroke="#6e6e6e" stroke-width="1.5" fill="none"/><path d="M14.8 3.2 Q16.8 7 14.8 10.8" stroke="#6e6e6e" stroke-width="1.5" fill="none"/><path d="M9.8 2.6 L14.2 12.6 H5.4Z" fill="#f7861c"/><rect x="4.6" y="11.8" width="10.4" height="2.4" rx="0.4" fill="#ef6c0c"/><path d="M7.9 6.6 H11.7 L12.3 8.1 H7.3Z" fill="#e9f6fb"/><path d="M6.9 9.4 H12.7 L13.2 10.5 H6.4Z" fill="#f9b36a"/><rect x="6.8" y="16.3" width="6" height="1.4" fill="#a0a0a0"/></svg>
<div class="a" style="left:30.899999999999977px;top:174.64000000000001px;width:427.5px;height:25.44px;overflow:hidden"><div class="t" style="left:5px;top:4.81px;font-size:17px;line-height:17px;color:#111;letter-spacing:0.1px;">07 Shadow Of The Sun.mp3</div></div>
<div class="t" style="left:463.4px;top:179.45px;font-size:17px;line-height:17px;color:#111;letter-spacing:0.12px;">10/12/2014…</div>
<div class="t" style="left:584.3000000000001px;top:179.45px;font-size:17px;line-height:17px;color:#111;letter-spacing:0.12px;">10/12/2014 16…</div>
<div class="t" style="left:723.6999999999999px;top:179.45px;font-size:17px;line-height:17px;color:#111;letter-spacing:0.25px;">Mp3 Audio</div>
<div class="t" style="left:964.4999999999999px;top:179.45px;font-size:17px;line-height:17px;color:#111;letter-spacing:0.1px;transform:translateX(-100%);">6 MB</div>
<div class="a" style="left:969.9999999999999px;top:174.64000000000001px;width:464.4000000000001px;height:25.44px;overflow:hidden"><div class="t" style="left:5px;top:4.81px;font-size:17px;line-height:17px;color:#111;letter-spacing:0.23px;">/Users/giorgos/Music/iTunes/iTunes Media/Music/Audioslave/Audioslave/01.m4a</div></div>
<div class="a" style="left:0px;top:200.08px;width:1434.4px;height:25.44px;background:#ffffff;"></div>
<div class="a" style="left:0px;top:223.92000000000002px;width:1434.4px;height:1.3px;background:#d5d5d5;"></div>
<div class="a" style="left:30.399999999999977px;top:200.08px;width:1px;height:25.44px;background:#d6d6d6;"></div>
<div class="a" style="left:457.9px;top:200.08px;width:1px;height:25.44px;background:#d6d6d6;"></div>
<div class="a" style="left:579.6px;top:200.08px;width:1px;height:25.44px;background:#d6d6d6;"></div>
<div class="a" style="left:719.4px;top:200.08px;width:1px;height:25.44px;background:#d6d6d6;"></div>
<div class="a" style="left:878.6999999999999px;top:200.08px;width:1px;height:25.44px;background:#d6d6d6;"></div>
<div class="a" style="left:969.4999999999999px;top:200.08px;width:1px;height:25.44px;background:#d6d6d6;"></div>
<svg style="left:1.5px;top:202.58px" width="20" height="21" viewBox="0 0 20 21"><path d="M2 0.5 H14 L18.5 5 V20.5 H2Z" fill="#fcfcfc" stroke="#ececec" stroke-width="0.7"/><path d="M4.8 3.2 Q2.8 7 4.8 10.8" stroke="#6e6e6e" stroke-width="1.5" fill="none"/><path d="M14.8 3.2 Q16.8 7 14.8 10.8" stroke="#6e6e6e" stroke-width="1.5" fill="none"/><path d="M9.8 2.6 L14.2 12.6 H5.4Z" fill="#f7861c"/><rect x="4.6" y="11.8" width="10.4" height="2.4" rx="0.4" fill="#ef6c0c"/><path d="M7.9 6.6 H11.7 L12.3 8.1 H7.3Z" fill="#e9f6fb"/><path d="M6.9 9.4 H12.7 L13.2 10.5 H6.4Z" fill="#f9b36a"/><rect x="6.8" y="16.3" width="6" height="1.4" fill="#a0a0a0"/></svg>
<div class="a" style="left:30.899999999999977px;top:200.08px;width:427.5px;height:25.44px;overflow:hidden"><div class="t" style="left:5px;top:4.81px;font-size:17px;line-height:17px;color:#111;letter-spacing:0.1px;">09 Exploder.mp3</div></div>
<div class="t" style="left:463.4px;top:204.89px;font-size:17px;line-height:17px;color:#111;letter-spacing:0.12px;">10/12/2014…</div>
<div class="t" style="left:584.3000000000001px;top:204.89px;font-size:17px;line-height:17px;color:#111;letter-spacing:0.12px;">10/12/2014 16…</div>
<div class="t" style="left:723.6999999999999px;top:204.89px;font-size:17px;line-height:17px;color:#111;letter-spacing:0.25px;">Mp3 Audio</div>
<div class="t" style="left:964.4999999999999px;top:204.89px;font-size:17px;line-height:17px;color:#111;letter-spacing:0.1px;transform:translateX(-100%);">3.6 MB</div>
<div class="a" style="left:969.9999999999999px;top:200.08px;width:464.4000000000001px;height:25.44px;overflow:hidden"><div class="t" style="left:5px;top:4.81px;font-size:17px;line-height:17px;color:#111;letter-spacing:0.23px;">/Users/giorgos/Music/iTunes/iTunes Media/Music/Audioslave/Audioslave/01.m4a</div></div>
<div class="a" style="left:0px;top:225.52px;width:1434.4px;height:25.44px;background:#f3f3f3;"></div>
<div class="a" style="left:0px;top:249.36px;width:1434.4px;height:1.3px;background:#d5d5d5;"></div>
<div class="a" style="left:30.399999999999977px;top:225.52px;width:1px;height:25.44px;background:#d6d6d6;"></div>
<div class="a" style="left:457.9px;top:225.52px;width:1px;height:25.44px;background:#d6d6d6;"></div>
<div class="a" style="left:579.6px;top:225.52px;width:1px;height:25.44px;background:#d6d6d6;"></div>
<div class="a" style="left:719.4px;top:225.52px;width:1px;height:25.44px;background:#d6d6d6;"></div>
<div class="a" style="left:878.6999999999999px;top:225.52px;width:1px;height:25.44px;background:#d6d6d6;"></div>
<div class="a" style="left:969.4999999999999px;top:225.52px;width:1px;height:25.44px;background:#d6d6d6;"></div>
<svg style="left:1.5px;top:228.02px" width="20" height="21" viewBox="0 0 20 21"><path d="M2 0.5 H14 L18.5 5 V20.5 H2Z" fill="#fcfcfc" stroke="#ececec" stroke-width="0.7"/><path d="M4.8 3.2 Q2.8 7 4.8 10.8" stroke="#6e6e6e" stroke-width="1.5" fill="none"/><path d="M14.8 3.2 Q16.8 7 14.8 10.8" stroke="#6e6e6e" stroke-width="1.5" fill="none"/><path d="M9.8 2.6 L14.2 12.6 H5.4Z" fill="#f7861c"/><rect x="4.6" y="11.8" width="10.4" height="2.4" rx="0.4" fill="#ef6c0c"/><path d="M7.9 6.6 H11.7 L12.3 8.1 H7.3Z" fill="#e9f6fb"/><path d="M6.9 9.4 H12.7 L13.2 10.5 H6.4Z" fill="#f9b36a"/><rect x="6.8" y="16.3" width="6" height="1.4" fill="#a0a0a0"/></svg>
<div class="a" style="left:30.899999999999977px;top:225.52px;width:427.5px;height:25.44px;overflow:hidden"><div class="t" style="left:5px;top:4.81px;font-size:17px;line-height:17px;color:#111;letter-spacing:0.1px;">10 Hypnotize.mp3</div></div>
<div class="t" style="left:463.4px;top:230.33px;font-size:17px;line-height:17px;color:#111;letter-spacing:0.12px;">11/12/2014…</div>
<div class="t" style="left:584.3000000000001px;top:230.33px;font-size:17px;line-height:17px;color:#111;letter-spacing:0.12px;">10/12/2014 16…</div>
<div class="t" style="left:723.6999999999999px;top:230.33px;font-size:17px;line-height:17px;color:#111;letter-spacing:0.25px;">Mp3 Audio</div>
<div class="t" style="left:964.4999999999999px;top:230.33px;font-size:17px;line-height:17px;color:#111;letter-spacing:0.1px;transform:translateX(-100%);">5.4 MB</div>
<div class="a" style="left:969.9999999999999px;top:225.52px;width:464.4000000000001px;height:25.44px;overflow:hidden"><div class="t" style="left:5px;top:4.81px;font-size:17px;line-height:17px;color:#111;letter-spacing:0.23px;">/Users/giorgos/Music/iTunes/iTunes Media/Music/Audioslave/Audioslave/01.m4a</div></div>
<div class="a" style="left:0px;top:250.96px;width:1434.4px;height:25.44px;background:#ffffff;"></div>
<div class="a" style="left:0px;top:274.8px;width:1434.4px;height:1.3px;background:#d5d5d5;"></div>
<div class="a" style="left:30.399999999999977px;top:250.96px;width:1px;height:25.44px;background:#d6d6d6;"></div>
<div class="a" style="left:457.9px;top:250.96px;width:1px;height:25.44px;background:#d6d6d6;"></div>
<div class="a" style="left:579.6px;top:250.96px;width:1px;height:25.44px;background:#d6d6d6;"></div>
<div class="a" style="left:719.4px;top:250.96px;width:1px;height:25.44px;background:#d6d6d6;"></div>
<div class="a" style="left:878.6999999999999px;top:250.96px;width:1px;height:25.44px;background:#d6d6d6;"></div>
<div class="a" style="left:969.4999999999999px;top:250.96px;width:1px;height:25.44px;background:#d6d6d6;"></div>
<svg style="left:1.5px;top:253.46px" width="20" height="21" viewBox="0 0 20 21"><path d="M2 0.5 H14 L18.5 5 V20.5 H2Z" fill="#fcfcfc" stroke="#ececec" stroke-width="0.7"/><path d="M4.8 3.2 Q2.8 7 4.8 10.8" stroke="#6e6e6e" stroke-width="1.5" fill="none"/><path d="M14.8 3.2 Q16.8 7 14.8 10.8" stroke="#6e6e6e" stroke-width="1.5" fill="none"/><path d="M9.8 2.6 L14.2 12.6 H5.4Z" fill="#f7861c"/><rect x="4.6" y="11.8" width="10.4" height="2.4" rx="0.4" fill="#ef6c0c"/><path d="M7.9 6.6 H11.7 L12.3 8.1 H7.3Z" fill="#e9f6fb"/><path d="M6.9 9.4 H12.7 L13.2 10.5 H6.4Z" fill="#f9b36a"/><rect x="6.8" y="16.3" width="6" height="1.4" fill="#a0a0a0"/></svg>
<div class="a" style="left:30.899999999999977px;top:250.96px;width:427.5px;height:25.44px;overflow:hidden"><div class="t" style="left:5px;top:4.81px;font-size:17px;line-height:17px;color:#111;letter-spacing:0.1px;">11 Bring Em Back Alive.m4a</div></div>
<div class="t" style="left:463.4px;top:255.77px;font-size:17px;line-height:17px;color:#111;letter-spacing:0.12px;">11/12/2014…</div>
<div class="t" style="left:584.3000000000001px;top:255.77px;font-size:17px;line-height:17px;color:#111;letter-spacing:0.12px;">10/12/2014 16…</div>
<div class="t" style="left:723.6999999999999px;top:255.77px;font-size:17px;line-height:17px;color:#111;letter-spacing:0.25px;">Apple Mpeg-4 A…</div>
<div class="t" style="left:964.4999999999999px;top:255.77px;font-size:17px;line-height:17px;color:#111;letter-spacing:0.1px;transform:translateX(-100%);">11.5 MB</div>
<div class="a" style="left:969.9999999999999px;top:250.96px;width:464.4000000000001px;height:25.44px;overflow:hidden"><div class="t" style="left:5px;top:4.81px;font-size:17px;line-height:17px;color:#111;letter-spacing:0.23px;">/Users/giorgos/Music/iTunes/iTunes Media/Music/Audioslave/Audioslave/01.m4a</div></div>
<div class="a" style="left:0px;top:276.4px;width:1434.4px;height:25.44px;background:#f3f3f3;"></div>
<div class="a" style="left:0px;top:300.23999999999995px;width:1434.4px;height:1.3px;background:#d5d5d5;"></div>
<div class="a" style="left:30.399999999999977px;top:276.4px;width:1px;height:25.44px;background:#d6d6d6;"></div>
<div class="a" style="left:457.9px;top:276.4px;width:1px;height:25.44px;background:#d6d6d6;"></div>
<div class="a" style="left:579.6px;top:276.4px;width:1px;height:25.44px;background:#d6d6d6;"></div>
<div class="a" style="left:719.4px;top:276.4px;width:1px;height:25.44px;background:#d6d6d6;"></div>
<div class="a" style="left:878.6999999999999px;top:276.4px;width:1px;height:25.44px;background:#d6d6d6;"></div>
<div class="a" style="left:969.4999999999999px;top:276.4px;width:1px;height:25.44px;background:#d6d6d6;"></div>
<svg style="left:1.5px;top:278.9px" width="20" height="21" viewBox="0 0 20 21"><path d="M2 0.5 H14 L18.5 5 V20.5 H2Z" fill="#fcfcfc" stroke="#ececec" stroke-width="0.7"/><path d="M4.8 3.2 Q2.8 7 4.8 10.8" stroke="#6e6e6e" stroke-width="1.5" fill="none"/><path d="M14.8 3.2 Q16.8 7 14.8 10.8" stroke="#6e6e6e" stroke-width="1.5" fill="none"/><path d="M9.8 2.6 L14.2 12.6 H5.4Z" fill="#f7861c"/><rect x="4.6" y="11.8" width="10.4" height="2.4" rx="0.4" fill="#ef6c0c"/><path d="M7.9 6.6 H11.7 L12.3 8.1 H7.3Z" fill="#e9f6fb"/><path d="M6.9 9.4 H12.7 L13.2 10.5 H6.4Z" fill="#f9b36a"/><rect x="6.8" y="16.3" width="6" height="1.4" fill="#a0a0a0"/></svg>
<div class="a" style="left:30.899999999999977px;top:276.4px;width:427.5px;height:25.44px;overflow:hidden"><div class="t" style="left:5px;top:4.81px;font-size:17px;line-height:17px;color:#111;letter-spacing:0.1px;">13 Getaway Car.m4a</div></div>
<div class="t" style="left:463.4px;top:281.21px;font-size:17px;line-height:17px;color:#111;letter-spacing:0.12px;">11/12/2014…</div>
<div class="t" style="left:584.3000000000001px;top:281.21px;font-size:17px;line-height:17px;color:#111;letter-spacing:0.12px;">11/12/2014 00…</div>
<div class="t" style="left:723.6999999999999px;top:281.21px;font-size:17px;line-height:17px;color:#111;letter-spacing:0.25px;">Apple Mpeg-4 A…</div>
<div class="t" style="left:964.4999999999999px;top:281.21px;font-size:17px;line-height:17px;color:#111;letter-spacing:0.1px;transform:translateX(-100%);">10.4 MB</div>
<div class="a" style="left:969.9999999999999px;top:276.4px;width:464.4000000000001px;height:25.44px;overflow:hidden"><div class="t" style="left:5px;top:4.81px;font-size:17px;line-height:17px;color:#111;letter-spacing:0.23px;">/Users/giorgos/Music/iTunes/iTunes Media/Music/Audioslave/Audioslave/01.m4a</div></div>
<div class="a" style="left:0px;top:301.84000000000003px;width:1434.4px;height:25.44px;background:#ffffff;"></div>
<div class="a" style="left:0px;top:325.68px;width:1434.4px;height:1.3px;background:#d5d5d5;"></div>
<div class="a" style="left:30.399999999999977px;top:301.84000000000003px;width:1px;height:25.44px;background:#d6d6d6;"></div>
<div class="a" style="left:457.9px;top:301.84000000000003px;width:1px;height:25.44px;background:#d6d6d6;"></div>
<div class="a" style="left:579.6px;top:301.84000000000003px;width:1px;height:25.44px;background:#d6d6d6;"></div>
<div class="a" style="left:719.4px;top:301.84000000000003px;width:1px;height:25.44px;background:#d6d6d6;"></div>
<div class="a" style="left:878.6999999999999px;top:301.84000000000003px;width:1px;height:25.44px;background:#d6d6d6;"></div>
<div class="a" style="left:969.4999999999999px;top:301.84000000000003px;width:1px;height:25.44px;background:#d6d6d6;"></div>
<svg style="left:1.5px;top:304.34000000000003px" width="20" height="21" viewBox="0 0 20 21"><path d="M2 0.5 H14 L18.5 5 V20.5 H2Z" fill="#fcfcfc" stroke="#ececec" stroke-width="0.7"/><path d="M4.8 3.2 Q2.8 7 4.8 10.8" stroke="#6e6e6e" stroke-width="1.5" fill="none"/><path d="M14.8 3.2 Q16.8 7 14.8 10.8" stroke="#6e6e6e" stroke-width="1.5" fill="none"/><path d="M9.8 2.6 L14.2 12.6 H5.4Z" fill="#f7861c"/><rect x="4.6" y="11.8" width="10.4" height="2.4" rx="0.4" fill="#ef6c0c"/><path d="M7.9 6.6 H11.7 L12.3 8.1 H7.3Z" fill="#e9f6fb"/><path d="M6.9 9.4 H12.7 L13.2 10.5 H6.4Z" fill="#f9b36a"/><rect x="6.8" y="16.3" width="6" height="1.4" fill="#a0a0a0"/></svg>
<div class="a" style="left:30.899999999999977px;top:301.84000000000003px;width:427.5px;height:25.44px;overflow:hidden"><div class="t" style="left:5px;top:4.81px;font-size:17px;line-height:17px;color:#111;letter-spacing:0.1px;">14 The Last Remaining Light.m4a</div></div>
<div class="t" style="left:463.4px;top:306.65px;font-size:17px;line-height:17px;color:#111;letter-spacing:0.12px;">11/12/2014…</div>
<div class="t" style="left:584.3000000000001px;top:306.65px;font-size:17px;line-height:17px;color:#111;letter-spacing:0.12px;">11/12/2014 00…</div>
<div class="t" style="left:723.6999999999999px;top:306.65px;font-size:17px;line-height:17px;color:#111;letter-spacing:0.25px;">Apple Mpeg-4 A…</div>
<div class="t" style="left:964.4999999999999px;top:306.65px;font-size:17px;line-height:17px;color:#111;letter-spacing:0.1px;transform:translateX(-100%);">11.1 MB</div>
<div class="a" style="left:969.9999999999999px;top:301.84000000000003px;width:464.4000000000001px;height:25.44px;overflow:hidden"><div class="t" style="left:5px;top:4.81px;font-size:17px;line-height:17px;color:#111;letter-spacing:0.23px;">/Users/giorgos/Music/iTunes/iTunes Media/Music/Audioslave/Audioslave/01.m4a</div></div>
<div class="a" style="left:0px;top:327.28000000000003px;width:1434.4px;height:25.44px;background:#f3f3f3;"></div>
<div class="a" style="left:0px;top:351.12px;width:1434.4px;height:1.3px;background:#d5d5d5;"></div>
<div class="a" style="left:30.399999999999977px;top:327.28000000000003px;width:1px;height:25.44px;background:#d6d6d6;"></div>
<div class="a" style="left:457.9px;top:327.28000000000003px;width:1px;height:25.44px;background:#d6d6d6;"></div>
<div class="a" style="left:579.6px;top:327.28000000000003px;width:1px;height:25.44px;background:#d6d6d6;"></div>
<div class="a" style="left:719.4px;top:327.28000000000003px;width:1px;height:25.44px;background:#d6d6d6;"></div>
<div class="a" style="left:878.6999999999999px;top:327.28000000000003px;width:1px;height:25.44px;background:#d6d6d6;"></div>
<div class="a" style="left:969.4999999999999px;top:327.28000000000003px;width:1px;height:25.44px;background:#d6d6d6;"></div>
<svg style="left:1px;top:331.78000000000003px" width="22" height="17" viewBox="0 0 22 17"><path d="M0 1 Q0 0 1 0 H7 L8.5 2 H21 Q22 2 22 3 V16 Q22 17 21 17 H1 Q0 17 0 16Z" fill="#5ad6f8"/><path d="M0 4 Q0 3 1 3 H21 Q22 3 22 4 V16 Q22 17 21 17 H1 Q0 17 0 16Z" fill="#12cdf6"/></svg>
<div class="a" style="left:30.899999999999977px;top:327.28000000000003px;width:427.5px;height:25.44px;overflow:hidden"><div class="t" style="left:5px;top:4.81px;font-size:17px;line-height:17px;color:#111;font-weight:bold;">Out Of Exile</div></div>
<div class="t" style="left:463.4px;top:332.09px;font-size:17px;line-height:17px;color:#111;font-weight:bold;letter-spacing:0.12px;">10/12/2014…</div>
<div class="t" style="left:584.3000000000001px;top:332.09px;font-size:17px;line-height:17px;color:#111;font-weight:bold;letter-spacing:0.12px;">10/12/2014 16…</div>
<div class="t" style="left:723.6999999999999px;top:332.09px;font-size:17px;line-height:17px;color:#111;font-weight:bold;letter-spacing:0.25px;">Folder</div>
<div class="t" style="left:964.4999999999999px;top:332.09px;font-size:17px;line-height:17px;color:#111;font-weight:bold;letter-spacing:0.1px;transform:translateX(-100%);">113.8 MB</div>
<div class="a" style="left:969.9999999999999px;top:327.28000000000003px;width:464.4000000000001px;height:25.44px;overflow:hidden"><div class="t" style="left:5px;top:4.81px;font-size:17px;line-height:17px;color:#111;font-weight:bold;letter-spacing:0.24px;">/Users/giorgos/Music/iTunes/iTunes Media/Music/Audioslave</div></div>
<div class="a" style="left:0px;top:352.72px;width:1434.4px;height:25.44px;background:#ffffff;"></div>
<div class="a" style="left:0px;top:376.56px;width:1434.4px;height:1.3px;background:#d5d5d5;"></div>
<div class="a" style="left:30.399999999999977px;top:352.72px;width:1px;height:25.44px;background:#d6d6d6;"></div>
<div class="a" style="left:457.9px;top:352.72px;width:1px;height:25.44px;background:#d6d6d6;"></div>
<div class="a" style="left:579.6px;top:352.72px;width:1px;height:25.44px;background:#d6d6d6;"></div>
<div class="a" style="left:719.4px;top:352.72px;width:1px;height:25.44px;background:#d6d6d6;"></div>
<div class="a" style="left:878.6999999999999px;top:352.72px;width:1px;height:25.44px;background:#d6d6d6;"></div>
<div class="a" style="left:969.4999999999999px;top:352.72px;width:1px;height:25.44px;background:#d6d6d6;"></div>
<svg style="left:1.5px;top:355.22px" width="20" height="21" viewBox="0 0 20 21"><path d="M2 0.5 H14 L18.5 5 V20.5 H2Z" fill="#fcfcfc" stroke="#ececec" stroke-width="0.7"/><path d="M4.8 3.2 Q2.8 7 4.8 10.8" stroke="#6e6e6e" stroke-width="1.5" fill="none"/><path d="M14.8 3.2 Q16.8 7 14.8 10.8" stroke="#6e6e6e" stroke-width="1.5" fill="none"/><path d="M9.8 2.6 L14.2 12.6 H5.4Z" fill="#f7861c"/><rect x="4.6" y="11.8" width="10.4" height="2.4" rx="0.4" fill="#ef6c0c"/><path d="M7.9 6.6 H11.7 L12.3 8.1 H7.3Z" fill="#e9f6fb"/><path d="M6.9 9.4 H12.7 L13.2 10.5 H6.4Z" fill="#f9b36a"/><rect x="6.8" y="16.3" width="6" height="1.4" fill="#a0a0a0"/></svg>
<div class="a" style="left:30.899999999999977px;top:352.72px;width:427.5px;height:25.44px;overflow:hidden"><div class="t" style="left:5px;top:4.81px;font-size:17px;line-height:17px;color:#111;letter-spacing:0.1px;">01 Your Time Has Come.m4a</div></div>
<div class="t" style="left:463.4px;top:357.53px;font-size:17px;line-height:17px;color:#111;letter-spacing:0.12px;">10/12/2014…</div>
<div class="t" style="left:584.3000000000001px;top:357.53px;font-size:17px;line-height:17px;color:#111;letter-spacing:0.12px;">10/12/2014 16…</div>
<div class="t" style="left:723.6999999999999px;top:357.53px;font-size:17px;line-height:17px;color:#111;letter-spacing:0.25px;">Apple Mpeg-4 A…</div>
<div class="t" style="left:964.4999999999999px;top:357.53px;font-size:17px;line-height:17px;color:#111;letter-spacing:0.1px;transform:translateX(-100%);">9.1 MB</div>
<div class="a" style="left:969.9999999999999px;top:352.72px;width:464.4000000000001px;height:25.44px;overflow:hidden"><div class="t" style="left:5px;top:4.81px;font-size:17px;line-height:17px;color:#111;letter-spacing:0.23px;">/Users/giorgos/Music/iTunes/iTunes Media/Music/Audioslave/Audioslave/01.m4a</div></div>
<div class="a" style="left:0px;top:378.16px;width:1434.4px;height:25.44px;background:#f3f3f3;"></div>
<div class="a" style="left:0px;top:402.0px;width:1434.4px;height:1.3px;background:#d5d5d5;"></div>
<div class="a" style="left:30.399999999999977px;top:378.16px;width:1px;height:25.44px;background:#d6d6d6;"></div>
<div class="a" style="left:457.9px;top:378.16px;width:1px;height:25.44px;background:#d6d6d6;"></div>
<div class="a" style="left:579.6px;top:378.16px;width:1px;height:25.44px;background:#d6d6d6;"></div>
<div class="a" style="left:719.4px;top:378.16px;width:1px;height:25.44px;background:#d6d6d6;"></div>
<div class="a" style="left:878.6999999999999px;top:378.16px;width:1px;height:25.44px;background:#d6d6d6;"></div>
<div class="a" style="left:969.4999999999999px;top:378.16px;width:1px;height:25.44px;background:#d6d6d6;"></div>
<svg style="left:1.5px;top:380.66px" width="20" height="21" viewBox="0 0 20 21"><path d="M2 0.5 H14 L18.5 5 V20.5 H2Z" fill="#fcfcfc" stroke="#ececec" stroke-width="0.7"/><path d="M4.8 3.2 Q2.8 7 4.8 10.8" stroke="#6e6e6e" stroke-width="1.5" fill="none"/><path d="M14.8 3.2 Q16.8 7 14.8 10.8" stroke="#6e6e6e" stroke-width="1.5" fill="none"/><path d="M9.8 2.6 L14.2 12.6 H5.4Z" fill="#f7861c"/><rect x="4.6" y="11.8" width="10.4" height="2.4" rx="0.4" fill="#ef6c0c"/><path d="M7.9 6.6 H11.7 L12.3 8.1 H7.3Z" fill="#e9f6fb"/><path d="M6.9 9.4 H12.7 L13.2 10.5 H6.4Z" fill="#f9b36a"/><rect x="6.8" y="16.3" width="6" height="1.4" fill="#a0a0a0"/></svg>
<div class="a" style="left:30.899999999999977px;top:378.16px;width:427.5px;height:25.44px;overflow:hidden"><div class="t" style="left:5px;top:4.81px;font-size:17px;line-height:17px;color:#111;letter-spacing:0.1px;">02 Out Of Exile.m4a</div></div>
<div class="t" style="left:463.4px;top:382.97px;font-size:17px;line-height:17px;color:#111;letter-spacing:0.12px;">10/12/2014…</div>
<div class="t" style="left:584.3000000000001px;top:382.97px;font-size:17px;line-height:17px;color:#111;letter-spacing:0.12px;">10/12/2014 16…</div>
<div class="t" style="left:723.6999999999999px;top:382.97px;font-size:17px;line-height:17px;color:#111;letter-spacing:0.25px;">Apple Mpeg-4 A…</div>
<div class="t" style="left:964.4999999999999px;top:382.97px;font-size:17px;line-height:17px;color:#111;letter-spacing:0.1px;transform:translateX(-100%);">10.2 MB</div>
<div class="a" style="left:969.9999999999999px;top:378.16px;width:464.4000000000001px;height:25.44px;overflow:hidden"><div class="t" style="left:5px;top:4.81px;font-size:17px;line-height:17px;color:#111;letter-spacing:0.23px;">/Users/giorgos/Music/iTunes/iTunes Media/Music/Audioslave/Audioslave/01.m4a</div></div>
<div class="a" style="left:0px;top:403.6px;width:1434.4px;height:25.44px;background:#ffffff;"></div>
<div class="a" style="left:0px;top:427.44px;width:1434.4px;height:1.3px;background:#d5d5d5;"></div>
<div class="a" style="left:30.399999999999977px;top:403.6px;width:1px;height:25.44px;background:#d6d6d6;"></div>
<div class="a" style="left:457.9px;top:403.6px;width:1px;height:25.44px;background:#d6d6d6;"></div>
<div class="a" style="left:579.6px;top:403.6px;width:1px;height:25.44px;background:#d6d6d6;"></div>
<div class="a" style="left:719.4px;top:403.6px;width:1px;height:25.44px;background:#d6d6d6;"></div>
<div class="a" style="left:878.6999999999999px;top:403.6px;width:1px;height:25.44px;background:#d6d6d6;"></div>
<div class="a" style="left:969.4999999999999px;top:403.6px;width:1px;height:25.44px;background:#d6d6d6;"></div>
<svg style="left:1.5px;top:406.1px" width="20" height="21" viewBox="0 0 20 21"><path d="M2 0.5 H14 L18.5 5 V20.5 H2Z" fill="#fcfcfc" stroke="#ececec" stroke-width="0.7"/><path d="M4.8 3.2 Q2.8 7 4.8 10.8" stroke="#6e6e6e" stroke-width="1.5" fill="none"/><path d="M14.8 3.2 Q16.8 7 14.8 10.8" stroke="#6e6e6e" stroke-width="1.5" fill="none"/><path d="M9.8 2.6 L14.2 12.6 H5.4Z" fill="#f7861c"/><rect x="4.6" y="11.8" width="10.4" height="2.4" rx="0.4" fill="#ef6c0c"/><path d="M7.9 6.6 H11.7 L12.3 8.1 H7.3Z" fill="#e9f6fb"/><path d="M6.9 9.4 H12.7 L13.2 10.5 H6.4Z" fill="#f9b36a"/><rect x="6.8" y="16.3" width="6" height="1.4" fill="#a0a0a0"/></svg>
<div class="a" style="left:30.899999999999977px;top:403.6px;width:427.5px;height:25.44px;overflow:hidden"><div class="t" style="left:5px;top:4.81px;font-size:17px;line-height:17px;color:#111;letter-spacing:0.1px;">03 Be Yourself.m4a</div></div>
<div class="t" style="left:463.4px;top:408.41px;font-size:17px;line-height:17px;color:#111;letter-spacing:0.12px;">10/12/2014…</div>
<div class="t" style="left:584.3000000000001px;top:408.41px;font-size:17px;line-height:17px;color:#111;letter-spacing:0.12px;">10/12/2014 16…</div>
<div class="t" style="left:723.6999999999999px;top:408.41px;font-size:17px;line-height:17px;color:#111;letter-spacing:0.25px;">Apple Mpeg-4 A…</div>
<div class="t" style="left:964.4999999999999px;top:408.41px;font-size:17px;line-height:17px;color:#111;letter-spacing:0.1px;transform:translateX(-100%);">9.7 MB</div>
<div class="a" style="left:969.9999999999999px;top:403.6px;width:464.4000000000001px;height:25.44px;overflow:hidden"><div class="t" style="left:5px;top:4.81px;font-size:17px;line-height:17px;color:#111;letter-spacing:0.23px;">/Users/giorgos/Music/iTunes/iTunes Media/Music/Audioslave/Audioslave/01.m4a</div></div>
<div class="a" style="left:0px;top:429.04px;width:1434.4px;height:25.44px;background:#f3f3f3;"></div>
<div class="a" style="left:0px;top:452.88px;width:1434.4px;height:1.3px;background:#d5d5d5;"></div>
<div class="a" style="left:30.399999999999977px;top:429.04px;width:1px;height:25.44px;background:#d6d6d6;"></div>
<div class="a" style="left:457.9px;top:429.04px;width:1px;height:25.44px;background:#d6d6d6;"></div>
<div class="a" style="left:579.6px;top:429.04px;width:1px;height:25.44px;background:#d6d6d6;"></div>
<div class="a" style="left:719.4px;top:429.04px;width:1px;height:25.44px;background:#d6d6d6;"></div>
<div class="a" style="left:878.6999999999999px;top:429.04px;width:1px;height:25.44px;background:#d6d6d6;"></div>
<div class="a" style="left:969.4999999999999px;top:429.04px;width:1px;height:25.44px;background:#d6d6d6;"></div>
<svg style="left:1.5px;top:431.54px" width="20" height="21" viewBox="0 0 20 21"><path d="M2 0.5 H14 L18.5 5 V20.5 H2Z" fill="#fcfcfc" stroke="#ececec" stroke-width="0.7"/><path d="M4.8 3.2 Q2.8 7 4.8 10.8" stroke="#6e6e6e" stroke-width="1.5" fill="none"/><path d="M14.8 3.2 Q16.8 7 14.8 10.8" stroke="#6e6e6e" stroke-width="1.5" fill="none"/><path d="M9.8 2.6 L14.2 12.6 H5.4Z" fill="#f7861c"/><rect x="4.6" y="11.8" width="10.4" height="2.4" rx="0.4" fill="#ef6c0c"/><path d="M7.9 6.6 H11.7 L12.3 8.1 H7.3Z" fill="#e9f6fb"/><path d="M6.9 9.4 H12.7 L13.2 10.5 H6.4Z" fill="#f9b36a"/><rect x="6.8" y="16.3" width="6" height="1.4" fill="#a0a0a0"/></svg>
<div class="a" style="left:30.899999999999977px;top:429.04px;width:427.5px;height:25.44px;overflow:hidden"><div class="t" style="left:5px;top:4.81px;font-size:17px;line-height:17px;color:#111;letter-spacing:0.1px;">04 Doesn't Remind Me.m4a</div></div>
<div class="t" style="left:463.4px;top:433.85px;font-size:17px;line-height:17px;color:#111;letter-spacing:0.12px;">10/12/2014…</div>
<div class="t" style="left:584.3000000000001px;top:433.85px;font-size:17px;line-height:17px;color:#111;letter-spacing:0.12px;">10/12/2014 16…</div>
<div class="t" style="left:723.6999999999999px;top:433.85px;font-size:17px;line-height:17px;color:#111;letter-spacing:0.25px;">Apple Mpeg-4 A…</div>
<div class="t" style="left:964.4999999999999px;top:433.85px;font-size:17px;line-height:17px;color:#111;letter-spacing:0.1px;transform:translateX(-100%);">9 MB</div>
<div class="a" style="left:969.9999999999999px;top:429.04px;width:464.4000000000001px;height:25.44px;overflow:hidden"><div class="t" style="left:5px;top:4.81px;font-size:17px;line-height:17px;color:#111;letter-spacing:0.23px;">/Users/giorgos/Music/iTunes/iTunes Media/Music/Audioslave/Audioslave/01.m4a</div></div>
<div class="a" style="left:0px;top:454.48px;width:1434.4px;height:25.44px;background:#ffffff;"></div>
<div class="a" style="left:0px;top:478.32px;width:1434.4px;height:1.3px;background:#d5d5d5;"></div>
<div class="a" style="left:30.399999999999977px;top:454.48px;width:1px;height:25.44px;background:#d6d6d6;"></div>
<div class="a" style="left:457.9px;top:454.48px;width:1px;height:25.44px;background:#d6d6d6;"></div>
<div class="a" style="left:579.6px;top:454.48px;width:1px;height:25.44px;background:#d6d6d6;"></div>
<div class="a" style="left:719.4px;top:454.48px;width:1px;height:25.44px;background:#d6d6d6;"></div>
<div class="a" style="left:878.6999999999999px;top:454.48px;width:1px;height:25.44px;background:#d6d6d6;"></div>
<div class="a" style="left:969.4999999999999px;top:454.48px;width:1px;height:25.44px;background:#d6d6d6;"></div>
<svg style="left:1.5px;top:456.98px" width="20" height="21" viewBox="0 0 20 21"><path d="M2 0.5 H14 L18.5 5 V20.5 H2Z" fill="#fcfcfc" stroke="#ececec" stroke-width="0.7"/><path d="M4.8 3.2 Q2.8 7 4.8 10.8" stroke="#6e6e6e" stroke-width="1.5" fill="none"/><path d="M14.8 3.2 Q16.8 7 14.8 10.8" stroke="#6e6e6e" stroke-width="1.5" fill="none"/><path d="M9.8 2.6 L14.2 12.6 H5.4Z" fill="#f7861c"/><rect x="4.6" y="11.8" width="10.4" height="2.4" rx="0.4" fill="#ef6c0c"/><path d="M7.9 6.6 H11.7 L12.3 8.1 H7.3Z" fill="#e9f6fb"/><path d="M6.9 9.4 H12.7 L13.2 10.5 H6.4Z" fill="#f9b36a"/><rect x="6.8" y="16.3" width="6" height="1.4" fill="#a0a0a0"/></svg>
<div class="a" style="left:30.899999999999977px;top:454.48px;width:427.5px;height:25.44px;overflow:hidden"><div class="t" style="left:5px;top:4.81px;font-size:17px;line-height:17px;color:#111;letter-spacing:0.1px;">05 Drown Me Slowly.m4a</div></div>
<div class="t" style="left:463.4px;top:459.29px;font-size:17px;line-height:17px;color:#111;letter-spacing:0.12px;">10/12/2014…</div>
<div class="t" style="left:584.3000000000001px;top:459.29px;font-size:17px;line-height:17px;color:#111;letter-spacing:0.12px;">10/12/2014 16…</div>
<div class="t" style="left:723.6999999999999px;top:459.29px;font-size:17px;line-height:17px;color:#111;letter-spacing:0.25px;">Apple Mpeg-4 A…</div>
<div class="t" style="left:964.4999999999999px;top:459.29px;font-size:17px;line-height:17px;color:#111;letter-spacing:0.1px;transform:translateX(-100%);">8.5 MB</div>
<div class="a" style="left:969.9999999999999px;top:454.48px;width:464.4000000000001px;height:25.44px;overflow:hidden"><div class="t" style="left:5px;top:4.81px;font-size:17px;line-height:17px;color:#111;letter-spacing:0.23px;">/Users/giorgos/Music/iTunes/iTunes Media/Music/Audioslave/Audioslave/01.m4a</div></div>
<div class="a" style="left:0px;top:479.92px;width:1434.4px;height:25.44px;background:#f3f3f3;"></div>
<div class="a" style="left:0px;top:503.76px;width:1434.4px;height:1.3px;background:#d5d5d5;"></div>
<div class="a" style="left:30.399999999999977px;top:479.92px;width:1px;height:25.44px;background:#d6d6d6;"></div>
<div class="a" style="left:457.9px;top:479.92px;width:1px;height:25.44px;background:#d6d6d6;"></div>
<div class="a" style="left:579.6px;top:479.92px;width:1px;height:25.44px;background:#d6d6d6;"></div>
<div class="a" style="left:719.4px;top:479.92px;width:1px;height:25.44px;background:#d6d6d6;"></div>
<div class="a" style="left:878.6999999999999px;top:479.92px;width:1px;height:25.44px;background:#d6d6d6;"></div>
<div class="a" style="left:969.4999999999999px;top:479.92px;width:1px;height:25.44px;background:#d6d6d6;"></div>
<svg style="left:1.5px;top:482.42px" width="20" height="21" viewBox="0 0 20 21"><path d="M2 0.5 H14 L18.5 5 V20.5 H2Z" fill="#fcfcfc" stroke="#ececec" stroke-width="0.7"/><path d="M4.8 3.2 Q2.8 7 4.8 10.8" stroke="#6e6e6e" stroke-width="1.5" fill="none"/><path d="M14.8 3.2 Q16.8 7 14.8 10.8" stroke="#6e6e6e" stroke-width="1.5" fill="none"/><path d="M9.8 2.6 L14.2 12.6 H5.4Z" fill="#f7861c"/><rect x="4.6" y="11.8" width="10.4" height="2.4" rx="0.4" fill="#ef6c0c"/><path d="M7.9 6.6 H11.7 L12.3 8.1 H7.3Z" fill="#e9f6fb"/><path d="M6.9 9.4 H12.7 L13.2 10.5 H6.4Z" fill="#f9b36a"/><rect x="6.8" y="16.3" width="6" height="1.4" fill="#a0a0a0"/></svg>
<div class="a" style="left:30.899999999999977px;top:479.92px;width:427.5px;height:25.44px;overflow:hidden"><div class="t" style="left:5px;top:4.81px;font-size:17px;line-height:17px;color:#111;letter-spacing:0.1px;">06 Heavens Dead.m4a</div></div>
<div class="t" style="left:463.4px;top:484.73px;font-size:17px;line-height:17px;color:#111;letter-spacing:0.12px;">10/12/2014…</div>
<div class="t" style="left:584.3000000000001px;top:484.73px;font-size:17px;line-height:17px;color:#111;letter-spacing:0.12px;">10/12/2014 16…</div>
<div class="t" style="left:723.6999999999999px;top:484.73px;font-size:17px;line-height:17px;color:#111;letter-spacing:0.25px;">Apple Mpeg-4 A…</div>
<div class="t" style="left:964.4999999999999px;top:484.73px;font-size:17px;line-height:17px;color:#111;letter-spacing:0.1px;transform:translateX(-100%);">9.7 MB</div>
<div class="a" style="left:969.9999999999999px;top:479.92px;width:464.4000000000001px;height:25.44px;overflow:hidden"><div class="t" style="left:5px;top:4.81px;font-size:17px;line-height:17px;color:#111;letter-spacing:0.23px;">/Users/giorgos/Music/iTunes/iTunes Media/Music/Audioslave/Audioslave/01.m4a</div></div>
<div class="a" style="left:0px;top:505.36px;width:1434.4px;height:25.44px;background:#ffffff;"></div>
<div class="a" style="left:0px;top:529.2px;width:1434.4px;height:1.3px;background:#d5d5d5;"></div>
<div class="a" style="left:30.399999999999977px;top:505.36px;width:1px;height:25.44px;background:#d6d6d6;"></div>
<div class="a" style="left:457.9px;top:505.36px;width:1px;height:25.44px;background:#d6d6d6;"></div>
<div class="a" style="left:579.6px;top:505.36px;width:1px;height:25.44px;background:#d6d6d6;"></div>
<div class="a" style="left:719.4px;top:505.36px;width:1px;height:25.44px;background:#d6d6d6;"></div>
<div class="a" style="left:878.6999999999999px;top:505.36px;width:1px;height:25.44px;background:#d6d6d6;"></div>
<div class="a" style="left:969.4999999999999px;top:505.36px;width:1px;height:25.44px;background:#d6d6d6;"></div>
<svg style="left:1.5px;top:507.86px" width="20" height="21" viewBox="0 0 20 21"><path d="M2 0.5 H14 L18.5 5 V20.5 H2Z" fill="#fcfcfc" stroke="#ececec" stroke-width="0.7"/><path d="M4.8 3.2 Q2.8 7 4.8 10.8" stroke="#6e6e6e" stroke-width="1.5" fill="none"/><path d="M14.8 3.2 Q16.8 7 14.8 10.8" stroke="#6e6e6e" stroke-width="1.5" fill="none"/><path d="M9.8 2.6 L14.2 12.6 H5.4Z" fill="#f7861c"/><rect x="4.6" y="11.8" width="10.4" height="2.4" rx="0.4" fill="#ef6c0c"/><path d="M7.9 6.6 H11.7 L12.3 8.1 H7.3Z" fill="#e9f6fb"/><path d="M6.9 9.4 H12.7 L13.2 10.5 H6.4Z" fill="#f9b36a"/><rect x="6.8" y="16.3" width="6" height="1.4" fill="#a0a0a0"/></svg>
<div class="a" style="left:30.899999999999977px;top:505.36px;width:427.5px;height:25.44px;overflow:hidden"><div class="t" style="left:5px;top:4.81px;font-size:17px;line-height:17px;color:#111;letter-spacing:0.1px;">07 The Worm.m4a</div></div>
<div class="t" style="left:463.4px;top:510.17px;font-size:17px;line-height:17px;color:#111;letter-spacing:0.12px;">10/12/2014…</div>
<div class="t" style="left:584.3000000000001px;top:510.17px;font-size:17px;line-height:17px;color:#111;letter-spacing:0.12px;">10/12/2014 16…</div>
<div class="t" style="left:723.6999999999999px;top:510.17px;font-size:17px;line-height:17px;color:#111;letter-spacing:0.25px;">Apple Mpeg-4 A…</div>
<div class="t" style="left:964.4999999999999px;top:510.17px;font-size:17px;line-height:17px;color:#111;letter-spacing:0.1px;transform:translateX(-100%);">8.4 MB</div>
<div class="a" style="left:969.9999999999999px;top:505.36px;width:464.4000000000001px;height:25.44px;overflow:hidden"><div class="t" style="left:5px;top:4.81px;font-size:17px;line-height:17px;color:#111;letter-spacing:0.23px;">/Users/giorgos/Music/iTunes/iTunes Media/Music/Audioslave/Audioslave/01.m4a</div></div>
<div class="a" style="left:0px;top:530.8px;width:1434.4px;height:25.44px;background:#f3f3f3;"></div>
<div class="a" style="left:0px;top:554.64px;width:1434.4px;height:1.3px;background:#d5d5d5;"></div>
<div class="a" style="left:30.399999999999977px;top:530.8px;width:1px;height:25.44px;background:#d6d6d6;"></div>
<div class="a" style="left:457.9px;top:530.8px;width:1px;height:25.44px;background:#d6d6d6;"></div>
<div class="a" style="left:579.6px;top:530.8px;width:1px;height:25.44px;background:#d6d6d6;"></div>
<div class="a" style="left:719.4px;top:530.8px;width:1px;height:25.44px;background:#d6d6d6;"></div>
<div class="a" style="left:878.6999999999999px;top:530.8px;width:1px;height:25.44px;background:#d6d6d6;"></div>
<div class="a" style="left:969.4999999999999px;top:530.8px;width:1px;height:25.44px;background:#d6d6d6;"></div>
<svg style="left:1.5px;top:533.3px" width="20" height="21" viewBox="0 0 20 21"><path d="M2 0.5 H14 L18.5 5 V20.5 H2Z" fill="#fcfcfc" stroke="#ececec" stroke-width="0.7"/><path d="M4.8 3.2 Q2.8 7 4.8 10.8" stroke="#6e6e6e" stroke-width="1.5" fill="none"/><path d="M14.8 3.2 Q16.8 7 14.8 10.8" stroke="#6e6e6e" stroke-width="1.5" fill="none"/><path d="M9.8 2.6 L14.2 12.6 H5.4Z" fill="#f7861c"/><rect x="4.6" y="11.8" width="10.4" height="2.4" rx="0.4" fill="#ef6c0c"/><path d="M7.9 6.6 H11.7 L12.3 8.1 H7.3Z" fill="#e9f6fb"/><path d="M6.9 9.4 H12.7 L13.2 10.5 H6.4Z" fill="#f9b36a"/><rect x="6.8" y="16.3" width="6" height="1.4" fill="#a0a0a0"/></svg>
<div class="a" style="left:30.899999999999977px;top:530.8px;width:427.5px;height:25.44px;overflow:hidden"><div class="t" style="left:5px;top:4.81px;font-size:17px;line-height:17px;color:#111;letter-spacing:0.1px;">08 Man Or Animal.m4a</div></div>
<div class="t" style="left:463.4px;top:535.61px;font-size:17px;line-height:17px;color:#111;letter-spacing:0.12px;">10/12/2014…</div>
<div class="t" style="left:584.3000000000001px;top:535.61px;font-size:17px;line-height:17px;color:#111;letter-spacing:0.12px;">10/12/2014 16…</div>
<div class="t" style="left:723.6999999999999px;top:535.61px;font-size:17px;line-height:17px;color:#111;letter-spacing:0.25px;">Apple Mpeg-4 A…</div>
<div class="t" style="left:964.4999999999999px;top:535.61px;font-size:17px;line-height:17px;color:#111;letter-spacing:0.1px;transform:translateX(-100%);">8.3 MB</div>
<div class="a" style="left:969.9999999999999px;top:530.8px;width:464.4000000000001px;height:25.44px;overflow:hidden"><div class="t" style="left:5px;top:4.81px;font-size:17px;line-height:17px;color:#111;letter-spacing:0.23px;">/Users/giorgos/Music/iTunes/iTunes Media/Music/Audioslave/Audioslave/01.m4a</div></div>
<div class="a" style="left:0px;top:556.24px;width:1434.4px;height:25.44px;background:#ffffff;"></div>
<div class="a" style="left:0px;top:580.08px;width:1434.4px;height:1.3px;background:#d5d5d5;"></div>
<div class="a" style="left:30.399999999999977px;top:556.24px;width:1px;height:25.44px;background:#d6d6d6;"></div>
<div class="a" style="left:457.9px;top:556.24px;width:1px;height:25.44px;background:#d6d6d6;"></div>
<div class="a" style="left:579.6px;top:556.24px;width:1px;height:25.44px;background:#d6d6d6;"></div>
<div class="a" style="left:719.4px;top:556.24px;width:1px;height:25.44px;background:#d6d6d6;"></div>
<div class="a" style="left:878.6999999999999px;top:556.24px;width:1px;height:25.44px;background:#d6d6d6;"></div>
<div class="a" style="left:969.4999999999999px;top:556.24px;width:1px;height:25.44px;background:#d6d6d6;"></div>
<svg style="left:1.5px;top:558.74px" width="20" height="21" viewBox="0 0 20 21"><path d="M2 0.5 H14 L18.5 5 V20.5 H2Z" fill="#fcfcfc" stroke="#ececec" stroke-width="0.7"/><path d="M4.8 3.2 Q2.8 7 4.8 10.8" stroke="#6e6e6e" stroke-width="1.5" fill="none"/><path d="M14.8 3.2 Q16.8 7 14.8 10.8" stroke="#6e6e6e" stroke-width="1.5" fill="none"/><path d="M9.8 2.6 L14.2 12.6 H5.4Z" fill="#f7861c"/><rect x="4.6" y="11.8" width="10.4" height="2.4" rx="0.4" fill="#ef6c0c"/><path d="M7.9 6.6 H11.7 L12.3 8.1 H7.3Z" fill="#e9f6fb"/><path d="M6.9 9.4 H12.7 L13.2 10.5 H6.4Z" fill="#f9b36a"/><rect x="6.8" y="16.3" width="6" height="1.4" fill="#a0a0a0"/></svg>
<div class="a" style="left:30.899999999999977px;top:556.24px;width:427.5px;height:25.44px;overflow:hidden"><div class="t" style="left:5px;top:4.81px;font-size:17px;line-height:17px;color:#111;letter-spacing:0.1px;">09 Yesterday To Tomorrow.m4a</div></div>
<div class="t" style="left:463.4px;top:561.05px;font-size:17px;line-height:17px;color:#111;letter-spacing:0.12px;">10/12/2014…</div>
<div class="t" style="left:584.3000000000001px;top:561.05px;font-size:17px;line-height:17px;color:#111;letter-spacing:0.12px;">10/12/2014 16…</div>
<div class="t" style="left:723.6999999999999px;top:561.05px;font-size:17px;line-height:17px;color:#111;letter-spacing:0.25px;">Apple Mpeg-4 A…</div>
<div class="t" style="left:964.4999999999999px;top:561.05px;font-size:17px;line-height:17px;color:#111;letter-spacing:0.1px;transform:translateX(-100%);">9.7 MB</div>
<div class="a" style="left:969.9999999999999px;top:556.24px;width:464.4000000000001px;height:25.44px;overflow:hidden"><div class="t" style="left:5px;top:4.81px;font-size:17px;line-height:17px;color:#111;letter-spacing:0.23px;">/Users/giorgos/Music/iTunes/iTunes Media/Music/Audioslave/Audioslave/01.m4a</div></div>
<div class="a" style="left:0px;top:581.6800000000001px;width:1434.4px;height:25.44px;background:#f3f3f3;"></div>
<div class="a" style="left:0px;top:605.5200000000001px;width:1434.4px;height:1.3px;background:#d5d5d5;"></div>
<div class="a" style="left:30.399999999999977px;top:581.6800000000001px;width:1px;height:25.44px;background:#d6d6d6;"></div>
<div class="a" style="left:457.9px;top:581.6800000000001px;width:1px;height:25.44px;background:#d6d6d6;"></div>
<div class="a" style="left:579.6px;top:581.6800000000001px;width:1px;height:25.44px;background:#d6d6d6;"></div>
<div class="a" style="left:719.4px;top:581.6800000000001px;width:1px;height:25.44px;background:#d6d6d6;"></div>
<div class="a" style="left:878.6999999999999px;top:581.6800000000001px;width:1px;height:25.44px;background:#d6d6d6;"></div>
<div class="a" style="left:969.4999999999999px;top:581.6800000000001px;width:1px;height:25.44px;background:#d6d6d6;"></div>
<svg style="left:1.5px;top:584.1800000000001px" width="20" height="21" viewBox="0 0 20 21"><path d="M2 0.5 H14 L18.5 5 V20.5 H2Z" fill="#fcfcfc" stroke="#ececec" stroke-width="0.7"/><path d="M4.8 3.2 Q2.8 7 4.8 10.8" stroke="#6e6e6e" stroke-width="1.5" fill="none"/><path d="M14.8 3.2 Q16.8 7 14.8 10.8" stroke="#6e6e6e" stroke-width="1.5" fill="none"/><path d="M9.8 2.6 L14.2 12.6 H5.4Z" fill="#f7861c"/><rect x="4.6" y="11.8" width="10.4" height="2.4" rx="0.4" fill="#ef6c0c"/><path d="M7.9 6.6 H11.7 L12.3 8.1 H7.3Z" fill="#e9f6fb"/><path d="M6.9 9.4 H12.7 L13.2 10.5 H6.4Z" fill="#f9b36a"/><rect x="6.8" y="16.3" width="6" height="1.4" fill="#a0a0a0"/></svg>
<div class="a" style="left:30.899999999999977px;top:581.6800000000001px;width:427.5px;height:25.44px;overflow:hidden"><div class="t" style="left:5px;top:4.81px;font-size:17px;line-height:17px;color:#111;letter-spacing:0.1px;">10 Dandelion.m4a</div></div>
<div class="t" style="left:463.4px;top:586.49px;font-size:17px;line-height:17px;color:#111;letter-spacing:0.12px;">10/12/2014…</div>
<div class="t" style="left:584.3000000000001px;top:586.49px;font-size:17px;line-height:17px;color:#111;letter-spacing:0.12px;">10/12/2014 16…</div>
<div class="t" style="left:723.6999999999999px;top:586.49px;font-size:17px;line-height:17px;color:#111;letter-spacing:0.25px;">Apple Mpeg-4 A…</div>
<div class="t" style="left:964.4999999999999px;top:586.49px;font-size:17px;line-height:17px;color:#111;letter-spacing:0.1px;transform:translateX(-100%);">9.7 MB</div>
<div class="a" style="left:969.9999999999999px;top:581.6800000000001px;width:464.4000000000001px;height:25.44px;overflow:hidden"><div class="t" style="left:5px;top:4.81px;font-size:17px;line-height:17px;color:#111;letter-spacing:0.23px;">/Users/giorgos/Music/iTunes/iTunes Media/Music/Audioslave/Audioslave/01.m4a</div></div>
<div class="a" style="left:0px;top:607.12px;width:1434.4px;height:25.44px;background:#ffffff;"></div>
<div class="a" style="left:0px;top:630.96px;width:1434.4px;height:1.3px;background:#d5d5d5;"></div>
<div class="a" style="left:30.399999999999977px;top:607.12px;width:1px;height:25.44px;background:#d6d6d6;"></div>
<div class="a" style="left:457.9px;top:607.12px;width:1px;height:25.44px;background:#d6d6d6;"></div>
<div class="a" style="left:579.6px;top:607.12px;width:1px;height:25.44px;background:#d6d6d6;"></div>
<div class="a" style="left:719.4px;top:607.12px;width:1px;height:25.44px;background:#d6d6d6;"></div>
<div class="a" style="left:878.6999999999999px;top:607.12px;width:1px;height:25.44px;background:#d6d6d6;"></div>
<div class="a" style="left:969.4999999999999px;top:607.12px;width:1px;height:25.44px;background:#d6d6d6;"></div>
<svg style="left:1.5px;top:609.62px" width="20" height="21" viewBox="0 0 20 21"><path d="M2 0.5 H14 L18.5 5 V20.5 H2Z" fill="#fcfcfc" stroke="#ececec" stroke-width="0.7"/><path d="M4.8 3.2 Q2.8 7 4.8 10.8" stroke="#6e6e6e" stroke-width="1.5" fill="none"/><path d="M14.8 3.2 Q16.8 7 14.8 10.8" stroke="#6e6e6e" stroke-width="1.5" fill="none"/><path d="M9.8 2.6 L14.2 12.6 H5.4Z" fill="#f7861c"/><rect x="4.6" y="11.8" width="10.4" height="2.4" rx="0.4" fill="#ef6c0c"/><path d="M7.9 6.6 H11.7 L12.3 8.1 H7.3Z" fill="#e9f6fb"/><path d="M6.9 9.4 H12.7 L13.2 10.5 H6.4Z" fill="#f9b36a"/><rect x="6.8" y="16.3" width="6" height="1.4" fill="#a0a0a0"/></svg>
<div class="a" style="left:30.899999999999977px;top:607.12px;width:427.5px;height:25.44px;overflow:hidden"><div class="t" style="left:5px;top:4.81px;font-size:17px;line-height:17px;color:#111;letter-spacing:0.1px;">11 Number 1 Zero.m4a</div></div>
<div class="t" style="left:463.4px;top:611.93px;font-size:17px;line-height:17px;color:#111;letter-spacing:0.12px;">10/12/2014…</div>
<div class="t" style="left:584.3000000000001px;top:611.93px;font-size:17px;line-height:17px;color:#111;letter-spacing:0.12px;">10/12/2014 16…</div>
<div class="t" style="left:723.6999999999999px;top:611.93px;font-size:17px;line-height:17px;color:#111;letter-spacing:0.25px;">Apple Mpeg-4 A…</div>
<div class="t" style="left:964.4999999999999px;top:611.93px;font-size:17px;line-height:17px;color:#111;letter-spacing:0.1px;transform:translateX(-100%);">10.5 MB</div>
<div class="a" style="left:969.9999999999999px;top:607.12px;width:464.4000000000001px;height:25.44px;overflow:hidden"><div class="t" style="left:5px;top:4.81px;font-size:17px;line-height:17px;color:#111;letter-spacing:0.23px;">/Users/giorgos/Music/iTunes/iTunes Media/Music/Audioslave/Audioslave/01.m4a</div></div>
<div class="a" style="left:0px;top:632.5600000000001px;width:1434.4px;height:25.44px;background:#f3f3f3;"></div>
<div class="a" style="left:0px;top:656.4000000000001px;width:1434.4px;height:1.3px;background:#d5d5d5;"></div>
<div class="a" style="left:30.399999999999977px;top:632.5600000000001px;width:1px;height:25.44px;background:#d6d6d6;"></div>
<div class="a" style="left:457.9px;top:632.5600000000001px;width:1px;height:25.44px;background:#d6d6d6;"></div>
<div class="a" style="left:579.6px;top:632.5600000000001px;width:1px;height:25.44px;background:#d6d6d6;"></div>
<div class="a" style="left:719.4px;top:632.5600000000001px;width:1px;height:25.44px;background:#d6d6d6;"></div>
<div class="a" style="left:878.6999999999999px;top:632.5600000000001px;width:1px;height:25.44px;background:#d6d6d6;"></div>
<div class="a" style="left:969.4999999999999px;top:632.5600000000001px;width:1px;height:25.44px;background:#d6d6d6;"></div>
<svg style="left:1.5px;top:635.0600000000001px" width="20" height="21" viewBox="0 0 20 21"><path d="M2 0.5 H14 L18.5 5 V20.5 H2Z" fill="#fcfcfc" stroke="#ececec" stroke-width="0.7"/><path d="M4.8 3.2 Q2.8 7 4.8 10.8" stroke="#6e6e6e" stroke-width="1.5" fill="none"/><path d="M14.8 3.2 Q16.8 7 14.8 10.8" stroke="#6e6e6e" stroke-width="1.5" fill="none"/><path d="M9.8 2.6 L14.2 12.6 H5.4Z" fill="#f7861c"/><rect x="4.6" y="11.8" width="10.4" height="2.4" rx="0.4" fill="#ef6c0c"/><path d="M7.9 6.6 H11.7 L12.3 8.1 H7.3Z" fill="#e9f6fb"/><path d="M6.9 9.4 H12.7 L13.2 10.5 H6.4Z" fill="#f9b36a"/><rect x="6.8" y="16.3" width="6" height="1.4" fill="#a0a0a0"/></svg>
<div class="a" style="left:30.899999999999977px;top:632.5600000000001px;width:427.5px;height:25.44px;overflow:hidden"><div class="t" style="left:5px;top:4.81px;font-size:17px;line-height:17px;color:#111;letter-spacing:0.1px;">12 The Curse.m4a</div></div>
<div class="t" style="left:463.4px;top:637.37px;font-size:17px;line-height:17px;color:#111;letter-spacing:0.12px;">10/12/2014…</div>
<div class="t" style="left:584.3000000000001px;top:637.37px;font-size:17px;line-height:17px;color:#111;letter-spacing:0.12px;">10/12/2014 16…</div>
<div class="t" style="left:723.6999999999999px;top:637.37px;font-size:17px;line-height:17px;color:#111;letter-spacing:0.25px;">Apple Mpeg-4 A…</div>
<div class="t" style="left:964.4999999999999px;top:637.37px;font-size:17px;line-height:17px;color:#111;letter-spacing:0.1px;transform:translateX(-100%);">10.9 MB</div>
<div class="a" style="left:969.9999999999999px;top:632.5600000000001px;width:464.4000000000001px;height:25.44px;overflow:hidden"><div class="t" style="left:5px;top:4.81px;font-size:17px;line-height:17px;color:#111;letter-spacing:0.23px;">/Users/giorgos/Music/iTunes/iTunes Media/Music/Audioslave/Audioslave/01.m4a</div></div>
<div class="a" style="left:0px;top:658.0px;width:1434.4px;height:25.44px;background:#ffffff;"></div>
<div class="a" style="left:0px;top:681.84px;width:1434.4px;height:1.3px;background:#d5d5d5;"></div>
<div class="a" style="left:30.399999999999977px;top:658.0px;width:1px;height:25.44px;background:#d6d6d6;"></div>
<div class="a" style="left:457.9px;top:658.0px;width:1px;height:25.44px;background:#d6d6d6;"></div>
<div class="a" style="left:579.6px;top:658.0px;width:1px;height:25.44px;background:#d6d6d6;"></div>
<div class="a" style="left:719.4px;top:658.0px;width:1px;height:25.44px;background:#d6d6d6;"></div>
<div class="a" style="left:878.6999999999999px;top:658.0px;width:1px;height:25.44px;background:#d6d6d6;"></div>
<div class="a" style="left:969.4999999999999px;top:658.0px;width:1px;height:25.44px;background:#d6d6d6;"></div>
<svg style="left:1px;top:662.5px" width="22" height="17" viewBox="0 0 22 17"><path d="M0 1 Q0 0 1 0 H7 L8.5 2 H21 Q22 2 22 3 V16 Q22 17 21 17 H1 Q0 17 0 16Z" fill="#5ad6f8"/><path d="M0 4 Q0 3 1 3 H21 Q22 3 22 4 V16 Q22 17 21 17 H1 Q0 17 0 16Z" fill="#12cdf6"/></svg>
<div class="a" style="left:30.899999999999977px;top:658.0px;width:427.5px;height:25.44px;overflow:hidden"><div class="t" style="left:5px;top:4.81px;font-size:17px;line-height:17px;color:#111;font-weight:bold;">Revelations</div></div>
<div class="t" style="left:463.4px;top:662.81px;font-size:17px;line-height:17px;color:#111;font-weight:bold;letter-spacing:0.12px;">10/12/2014…</div>
<div class="t" style="left:584.3000000000001px;top:662.81px;font-size:17px;line-height:17px;color:#111;font-weight:bold;letter-spacing:0.12px;">10/12/2014 16…</div>
<div class="t" style="left:723.6999999999999px;top:662.81px;font-size:17px;line-height:17px;color:#111;font-weight:bold;letter-spacing:0.25px;">Folder</div>
<div class="t" style="left:964.4999999999999px;top:662.81px;font-size:17px;line-height:17px;color:#111;font-weight:bold;letter-spacing:0.1px;transform:translateX(-100%);">103.7 MB</div>
<div class="a" style="left:969.9999999999999px;top:658.0px;width:464.4000000000001px;height:25.44px;overflow:hidden"><div class="t" style="left:5px;top:4.81px;font-size:17px;line-height:17px;color:#111;font-weight:bold;letter-spacing:0.24px;">/Users/giorgos/Music/iTunes/iTunes Media/Music/Audioslave</div></div>
<div class="a" style="left:0px;top:683.44px;width:1434.4px;height:25.44px;background:#f3f3f3;"></div>
<div class="a" style="left:0px;top:707.2800000000001px;width:1434.4px;height:1.3px;background:#d5d5d5;"></div>
<div class="a" style="left:30.399999999999977px;top:683.44px;width:1px;height:25.44px;background:#d6d6d6;"></div>
<div class="a" style="left:457.9px;top:683.44px;width:1px;height:25.44px;background:#d6d6d6;"></div>
<div class="a" style="left:579.6px;top:683.44px;width:1px;height:25.44px;background:#d6d6d6;"></div>
<div class="a" style="left:719.4px;top:683.44px;width:1px;height:25.44px;background:#d6d6d6;"></div>
<div class="a" style="left:878.6999999999999px;top:683.44px;width:1px;height:25.44px;background:#d6d6d6;"></div>
<div class="a" style="left:969.4999999999999px;top:683.44px;width:1px;height:25.44px;background:#d6d6d6;"></div>
<svg style="left:1.5px;top:685.94px" width="20" height="21" viewBox="0 0 20 21"><path d="M2 0.5 H14 L18.5 5 V20.5 H2Z" fill="#fcfcfc" stroke="#ececec" stroke-width="0.7"/><path d="M4.8 3.2 Q2.8 7 4.8 10.8" stroke="#6e6e6e" stroke-width="1.5" fill="none"/><path d="M14.8 3.2 Q16.8 7 14.8 10.8" stroke="#6e6e6e" stroke-width="1.5" fill="none"/><path d="M9.8 2.6 L14.2 12.6 H5.4Z" fill="#f7861c"/><rect x="4.6" y="11.8" width="10.4" height="2.4" rx="0.4" fill="#ef6c0c"/><path d="M7.9 6.6 H11.7 L12.3 8.1 H7.3Z" fill="#e9f6fb"/><path d="M6.9 9.4 H12.7 L13.2 10.5 H6.4Z" fill="#f9b36a"/><rect x="6.8" y="16.3" width="6" height="1.4" fill="#a0a0a0"/></svg>
<div class="a" style="left:30.899999999999977px;top:683.44px;width:427.5px;height:25.44px;overflow:hidden"><div class="t" style="left:5px;top:4.81px;font-size:17px;line-height:17px;color:#111;letter-spacing:0.1px;">01 revelations.m4a</div></div>
<div class="t" style="left:463.4px;top:688.25px;font-size:17px;line-height:17px;color:#111;letter-spacing:0.12px;">10/12/2014…</div>
<div class="t" style="left:584.3000000000001px;top:688.25px;font-size:17px;line-height:17px;color:#111;letter-spacing:0.12px;">10/12/2014 16…</div>
<div class="t" style="left:723.6999999999999px;top:688.25px;font-size:17px;line-height:17px;color:#111;letter-spacing:0.25px;">Apple Mpeg-4 A…</div>
<div class="t" style="left:964.4999999999999px;top:688.25px;font-size:17px;line-height:17px;color:#111;letter-spacing:0.1px;transform:translateX(-100%);">9.1 MB</div>
<div class="a" style="left:969.9999999999999px;top:683.44px;width:464.4000000000001px;height:25.44px;overflow:hidden"><div class="t" style="left:5px;top:4.81px;font-size:17px;line-height:17px;color:#111;letter-spacing:0.23px;">/Users/giorgos/Music/iTunes/iTunes Media/Music/Audioslave/Audioslave/01.m4a</div></div>
<div class="a" style="left:0px;top:708.88px;width:1434.4px;height:25.44px;background:#ffffff;"></div>
<div class="a" style="left:0px;top:732.72px;width:1434.4px;height:1.3px;background:#d5d5d5;"></div>
<div class="a" style="left:30.399999999999977px;top:708.88px;width:1px;height:25.44px;background:#d6d6d6;"></div>
<div class="a" style="left:457.9px;top:708.88px;width:1px;height:25.44px;background:#d6d6d6;"></div>
<div class="a" style="left:579.6px;top:708.88px;width:1px;height:25.44px;background:#d6d6d6;"></div>
<div class="a" style="left:719.4px;top:708.88px;width:1px;height:25.44px;background:#d6d6d6;"></div>
<div class="a" style="left:878.6999999999999px;top:708.88px;width:1px;height:25.44px;background:#d6d6d6;"></div>
<div class="a" style="left:969.4999999999999px;top:708.88px;width:1px;height:25.44px;background:#d6d6d6;"></div>
<svg style="left:1.5px;top:711.38px" width="20" height="21" viewBox="0 0 20 21"><path d="M2 0.5 H14 L18.5 5 V20.5 H2Z" fill="#fcfcfc" stroke="#ececec" stroke-width="0.7"/><path d="M4.8 3.2 Q2.8 7 4.8 10.8" stroke="#6e6e6e" stroke-width="1.5" fill="none"/><path d="M14.8 3.2 Q16.8 7 14.8 10.8" stroke="#6e6e6e" stroke-width="1.5" fill="none"/><path d="M9.8 2.6 L14.2 12.6 H5.4Z" fill="#f7861c"/><rect x="4.6" y="11.8" width="10.4" height="2.4" rx="0.4" fill="#ef6c0c"/><path d="M7.9 6.6 H11.7 L12.3 8.1 H7.3Z" fill="#e9f6fb"/><path d="M6.9 9.4 H12.7 L13.2 10.5 H6.4Z" fill="#f9b36a"/><rect x="6.8" y="16.3" width="6" height="1.4" fill="#a0a0a0"/></svg>
<div class="a" style="left:30.899999999999977px;top:708.88px;width:427.5px;height:25.44px;overflow:hidden"><div class="t" style="left:5px;top:4.81px;font-size:17px;line-height:17px;color:#111;letter-spacing:0.1px;">02 one and the same.m4a</div></div>
<div class="t" style="left:463.4px;top:713.69px;font-size:17px;line-height:17px;color:#111;letter-spacing:0.12px;">10/12/2014…</div>
<div class="t" style="left:584.3000000000001px;top:713.69px;font-size:17px;line-height:17px;color:#111;letter-spacing:0.12px;">10/12/2014 16…</div>
<div class="t" style="left:723.6999999999999px;top:713.69px;font-size:17px;line-height:17px;color:#111;letter-spacing:0.25px;">Apple Mpeg-4 A…</div>
<div class="t" style="left:964.4999999999999px;top:713.69px;font-size:17px;line-height:17px;color:#111;letter-spacing:0.1px;transform:translateX(-100%);">7.7 MB</div>
<div class="a" style="left:969.9999999999999px;top:708.88px;width:464.4000000000001px;height:25.44px;overflow:hidden"><div class="t" style="left:5px;top:4.81px;font-size:17px;line-height:17px;color:#111;letter-spacing:0.23px;">/Users/giorgos/Music/iTunes/iTunes Media/Music/Audioslave/Audioslave/01.m4a</div></div>
<div class="a" style="left:0px;top:734.32px;width:1434.4px;height:25.44px;background:#f3f3f3;"></div>
<div class="a" style="left:0px;top:758.1600000000001px;width:1434.4px;height:1.3px;background:#d5d5d5;"></div>
<div class="a" style="left:30.399999999999977px;top:734.32px;width:1px;height:25.44px;background:#d6d6d6;"></div>
<div class="a" style="left:457.9px;top:734.32px;width:1px;height:25.44px;background:#d6d6d6;"></div>
<div class="a" style="left:579.6px;top:734.32px;width:1px;height:25.44px;background:#d6d6d6;"></div>
<div class="a" style="left:719.4px;top:734.32px;width:1px;height:25.44px;background:#d6d6d6;"></div>
<div class="a" style="left:878.6999999999999px;top:734.32px;width:1px;height:25.44px;background:#d6d6d6;"></div>
<div class="a" style="left:969.4999999999999px;top:734.32px;width:1px;height:25.44px;background:#d6d6d6;"></div>
<svg style="left:1.5px;top:736.82px" width="20" height="21" viewBox="0 0 20 21"><path d="M2 0.5 H14 L18.5 5 V20.5 H2Z" fill="#fcfcfc" stroke="#ececec" stroke-width="0.7"/><path d="M4.8 3.2 Q2.8 7 4.8 10.8" stroke="#6e6e6e" stroke-width="1.5" fill="none"/><path d="M14.8 3.2 Q16.8 7 14.8 10.8" stroke="#6e6e6e" stroke-width="1.5" fill="none"/><path d="M9.8 2.6 L14.2 12.6 H5.4Z" fill="#f7861c"/><rect x="4.6" y="11.8" width="10.4" height="2.4" rx="0.4" fill="#ef6c0c"/><path d="M7.9 6.6 H11.7 L12.3 8.1 H7.3Z" fill="#e9f6fb"/><path d="M6.9 9.4 H12.7 L13.2 10.5 H6.4Z" fill="#f9b36a"/><rect x="6.8" y="16.3" width="6" height="1.4" fill="#a0a0a0"/></svg>
<div class="a" style="left:30.899999999999977px;top:734.32px;width:427.5px;height:25.44px;overflow:hidden"><div class="t" style="left:5px;top:4.81px;font-size:17px;line-height:17px;color:#111;letter-spacing:0.1px;">03 sound of a gun.m4a</div></div>
<div class="t" style="left:463.4px;top:739.13px;font-size:17px;line-height:17px;color:#111;letter-spacing:0.12px;">10/12/2014…</div>
<div class="t" style="left:584.3000000000001px;top:739.13px;font-size:17px;line-height:17px;color:#111;letter-spacing:0.12px;">10/12/2014 16…</div>
<div class="t" style="left:723.6999999999999px;top:739.13px;font-size:17px;line-height:17px;color:#111;letter-spacing:0.25px;">Apple Mpeg-4 A…</div>
<div class="t" style="left:964.4999999999999px;top:739.13px;font-size:17px;line-height:17px;color:#111;letter-spacing:0.1px;transform:translateX(-100%);">9.2 MB</div>
<div class="a" style="left:969.9999999999999px;top:734.32px;width:464.4000000000001px;height:25.44px;overflow:hidden"><div class="t" style="left:5px;top:4.81px;font-size:17px;line-height:17px;color:#111;letter-spacing:0.23px;">/Users/giorgos/Music/iTunes/iTunes Media/Music/Audioslave/Audioslave/01.m4a</div></div>
<div class="a" style="left:0px;top:759.76px;width:1434.4px;height:25.44px;background:#ffffff;"></div>
<div class="a" style="left:0px;top:783.6px;width:1434.4px;height:1.3px;background:#d5d5d5;"></div>
<div class="a" style="left:30.399999999999977px;top:759.76px;width:1px;height:25.44px;background:#d6d6d6;"></div>
<div class="a" style="left:457.9px;top:759.76px;width:1px;height:25.44px;background:#d6d6d6;"></div>
<div class="a" style="left:579.6px;top:759.76px;width:1px;height:25.44px;background:#d6d6d6;"></div>
<div class="a" style="left:719.4px;top:759.76px;width:1px;height:25.44px;background:#d6d6d6;"></div>
<div class="a" style="left:878.6999999999999px;top:759.76px;width:1px;height:25.44px;background:#d6d6d6;"></div>
<div class="a" style="left:969.4999999999999px;top:759.76px;width:1px;height:25.44px;background:#d6d6d6;"></div>
<svg style="left:1.5px;top:762.26px" width="20" height="21" viewBox="0 0 20 21"><path d="M2 0.5 H14 L18.5 5 V20.5 H2Z" fill="#fcfcfc" stroke="#ececec" stroke-width="0.7"/><path d="M4.8 3.2 Q2.8 7 4.8 10.8" stroke="#6e6e6e" stroke-width="1.5" fill="none"/><path d="M14.8 3.2 Q16.8 7 14.8 10.8" stroke="#6e6e6e" stroke-width="1.5" fill="none"/><path d="M9.8 2.6 L14.2 12.6 H5.4Z" fill="#f7861c"/><rect x="4.6" y="11.8" width="10.4" height="2.4" rx="0.4" fill="#ef6c0c"/><path d="M7.9 6.6 H11.7 L12.3 8.1 H7.3Z" fill="#e9f6fb"/><path d="M6.9 9.4 H12.7 L13.2 10.5 H6.4Z" fill="#f9b36a"/><rect x="6.8" y="16.3" width="6" height="1.4" fill="#a0a0a0"/></svg>
<div class="a" style="left:30.899999999999977px;top:759.76px;width:427.5px;height:25.44px;overflow:hidden"><div class="t" style="left:5px;top:4.81px;font-size:17px;line-height:17px;color:#111;letter-spacing:0.1px;">04 until we fall.m4a</div></div>
<div class="t" style="left:463.4px;top:764.57px;font-size:17px;line-height:17px;color:#111;letter-spacing:0.12px;">10/12/2014…</div>
<div class="t" style="left:584.3000000000001px;top:764.57px;font-size:17px;line-height:17px;color:#111;letter-spacing:0.12px;">10/12/2014 16…</div>
<div class="t" style="left:723.6999999999999px;top:764.57px;font-size:17px;line-height:17px;color:#111;letter-spacing:0.25px;">Apple Mpeg-4 A…</div>
<div class="t" style="left:964.4999999999999px;top:764.57px;font-size:17px;line-height:17px;color:#111;letter-spacing:0.1px;transform:translateX(-100%);">8.2 MB</div>
<div class="a" style="left:969.9999999999999px;top:759.76px;width:464.4000000000001px;height:25.44px;overflow:hidden"><div class="t" style="left:5px;top:4.81px;font-size:17px;line-height:17px;color:#111;letter-spacing:0.23px;">/Users/giorgos/Music/iTunes/iTunes Media/Music/Audioslave/Audioslave/01.m4a</div></div>
<div class="a" style="left:0px;top:785.2px;width:1434.4px;height:25.44px;background:#f3f3f3;"></div>
<div class="a" style="left:0px;top:809.0400000000001px;width:1434.4px;height:1.3px;background:#d5d5d5;"></div>
<div class="a" style="left:30.399999999999977px;top:785.2px;width:1px;height:25.44px;background:#d6d6d6;"></div>
<div class="a" style="left:457.9px;top:785.2px;width:1px;height:25.44px;background:#d6d6d6;"></div>
<div class="a" style="left:579.6px;top:785.2px;width:1px;height:25.44px;background:#d6d6d6;"></div>
<div class="a" style="left:719.4px;top:785.2px;width:1px;height:25.44px;background:#d6d6d6;"></div>
<div class="a" style="left:878.6999999999999px;top:785.2px;width:1px;height:25.44px;background:#d6d6d6;"></div>
<div class="a" style="left:969.4999999999999px;top:785.2px;width:1px;height:25.44px;background:#d6d6d6;"></div>
<svg style="left:1.5px;top:787.7px" width="20" height="21" viewBox="0 0 20 21"><path d="M2 0.5 H14 L18.5 5 V20.5 H2Z" fill="#fcfcfc" stroke="#ececec" stroke-width="0.7"/><path d="M4.8 3.2 Q2.8 7 4.8 10.8" stroke="#6e6e6e" stroke-width="1.5" fill="none"/><path d="M14.8 3.2 Q16.8 7 14.8 10.8" stroke="#6e6e6e" stroke-width="1.5" fill="none"/><path d="M9.8 2.6 L14.2 12.6 H5.4Z" fill="#f7861c"/><rect x="4.6" y="11.8" width="10.4" height="2.4" rx="0.4" fill="#ef6c0c"/><path d="M7.9 6.6 H11.7 L12.3 8.1 H7.3Z" fill="#e9f6fb"/><path d="M6.9 9.4 H12.7 L13.2 10.5 H6.4Z" fill="#f9b36a"/><rect x="6.8" y="16.3" width="6" height="1.4" fill="#a0a0a0"/></svg>
<div class="a" style="left:30.899999999999977px;top:785.2px;width:427.5px;height:25.44px;overflow:hidden"><div class="t" style="left:5px;top:4.81px;font-size:17px;line-height:17px;color:#111;letter-spacing:0.1px;">05 original fire.m4a</div></div>
<div class="t" style="left:463.4px;top:790.01px;font-size:17px;line-height:17px;color:#111;letter-spacing:0.12px;">10/12/2014…</div>
<div class="t" style="left:584.3000000000001px;top:790.01px;font-size:17px;line-height:17px;color:#111;letter-spacing:0.12px;">10/12/2014 16…</div>
<div class="t" style="left:723.6999999999999px;top:790.01px;font-size:17px;line-height:17px;color:#111;letter-spacing:0.25px;">Apple Mpeg-4 A…</div>
<div class="t" style="left:964.4999999999999px;top:790.01px;font-size:17px;line-height:17px;color:#111;letter-spacing:0.1px;transform:translateX(-100%);">7.8 MB</div>
<div class="a" style="left:969.9999999999999px;top:785.2px;width:464.4000000000001px;height:25.44px;overflow:hidden"><div class="t" style="left:5px;top:4.81px;font-size:17px;line-height:17px;color:#111;letter-spacing:0.23px;">/Users/giorgos/Music/iTunes/iTunes Media/Music/Audioslave/Audioslave/01.m4a</div></div>
<div class="a" style="left:0px;top:810.64px;width:1434.4px;height:25.44px;background:#ffffff;"></div>
<div class="a" style="left:0px;top:834.48px;width:1434.4px;height:1.3px;background:#d5d5d5;"></div>
<div class="a" style="left:30.399999999999977px;top:810.64px;width:1px;height:25.44px;background:#d6d6d6;"></div>
<div class="a" style="left:457.9px;top:810.64px;width:1px;height:25.44px;background:#d6d6d6;"></div>
<div class="a" style="left:579.6px;top:810.64px;width:1px;height:25.44px;background:#d6d6d6;"></div>
<div class="a" style="left:719.4px;top:810.64px;width:1px;height:25.44px;background:#d6d6d6;"></div>
<div class="a" style="left:878.6999999999999px;top:810.64px;width:1px;height:25.44px;background:#d6d6d6;"></div>
<div class="a" style="left:969.4999999999999px;top:810.64px;width:1px;height:25.44px;background:#d6d6d6;"></div>
<svg style="left:1.5px;top:813.14px" width="20" height="21" viewBox="0 0 20 21"><path d="M2 0.5 H14 L18.5 5 V20.5 H2Z" fill="#fcfcfc" stroke="#ececec" stroke-width="0.7"/><path d="M4.8 3.2 Q2.8 7 4.8 10.8" stroke="#6e6e6e" stroke-width="1.5" fill="none"/><path d="M14.8 3.2 Q16.8 7 14.8 10.8" stroke="#6e6e6e" stroke-width="1.5" fill="none"/><path d="M9.8 2.6 L14.2 12.6 H5.4Z" fill="#f7861c"/><rect x="4.6" y="11.8" width="10.4" height="2.4" rx="0.4" fill="#ef6c0c"/><path d="M7.9 6.6 H11.7 L12.3 8.1 H7.3Z" fill="#e9f6fb"/><path d="M6.9 9.4 H12.7 L13.2 10.5 H6.4Z" fill="#f9b36a"/><rect x="6.8" y="16.3" width="6" height="1.4" fill="#a0a0a0"/></svg>
<div class="a" style="left:30.899999999999977px;top:810.64px;width:427.5px;height:25.44px;overflow:hidden"><div class="t" style="left:5px;top:4.81px;font-size:17px;line-height:17px;color:#111;letter-spacing:0.1px;">06 broken city.m4a</div></div>
<div class="t" style="left:463.4px;top:815.45px;font-size:17px;line-height:17px;color:#111;letter-spacing:0.12px;">10/12/2014…</div>
<div class="t" style="left:584.3000000000001px;top:815.45px;font-size:17px;line-height:17px;color:#111;letter-spacing:0.12px;">10/12/2014 16…</div>
<div class="t" style="left:723.6999999999999px;top:815.45px;font-size:17px;line-height:17px;color:#111;letter-spacing:0.25px;">Apple Mpeg-4 A…</div>
<div class="t" style="left:964.4999999999999px;top:815.45px;font-size:17px;line-height:17px;color:#111;letter-spacing:0.1px;transform:translateX(-100%);">8.1 MB</div>
<div class="a" style="left:969.9999999999999px;top:810.64px;width:464.4000000000001px;height:25.44px;overflow:hidden"><div class="t" style="left:5px;top:4.81px;font-size:17px;line-height:17px;color:#111;letter-spacing:0.23px;">/Users/giorgos/Music/iTunes/iTunes Media/Music/Audioslave/Audioslave/01.m4a</div></div>
<div class="a" style="left:0px;top:836.08px;width:1434.4px;height:25.44px;background:#f3f3f3;"></div>
<div class="a" style="left:0px;top:859.9200000000001px;width:1434.4px;height:1.3px;background:#d5d5d5;"></div>
<div class="a" style="left:30.399999999999977px;top:836.08px;width:1px;height:25.44px;background:#d6d6d6;"></div>
<div class="a" style="left:457.9px;top:836.08px;width:1px;height:25.44px;background:#d6d6d6;"></div>
<div class="a" style="left:579.6px;top:836.08px;width:1px;height:25.44px;background:#d6d6d6;"></div>
<div class="a" style="left:719.4px;top:836.08px;width:1px;height:25.44px;background:#d6d6d6;"></div>
<div class="a" style="left:878.6999999999999px;top:836.08px;width:1px;height:25.44px;background:#d6d6d6;"></div>
<div class="a" style="left:969.4999999999999px;top:836.08px;width:1px;height:25.44px;background:#d6d6d6;"></div>
<svg style="left:1.5px;top:838.58px" width="20" height="21" viewBox="0 0 20 21"><path d="M2 0.5 H14 L18.5 5 V20.5 H2Z" fill="#fcfcfc" stroke="#ececec" stroke-width="0.7"/><path d="M4.8 3.2 Q2.8 7 4.8 10.8" stroke="#6e6e6e" stroke-width="1.5" fill="none"/><path d="M14.8 3.2 Q16.8 7 14.8 10.8" stroke="#6e6e6e" stroke-width="1.5" fill="none"/><path d="M9.8 2.6 L14.2 12.6 H5.4Z" fill="#f7861c"/><rect x="4.6" y="11.8" width="10.4" height="2.4" rx="0.4" fill="#ef6c0c"/><path d="M7.9 6.6 H11.7 L12.3 8.1 H7.3Z" fill="#e9f6fb"/><path d="M6.9 9.4 H12.7 L13.2 10.5 H6.4Z" fill="#f9b36a"/><rect x="6.8" y="16.3" width="6" height="1.4" fill="#a0a0a0"/></svg>
<div class="a" style="left:30.899999999999977px;top:836.08px;width:427.5px;height:25.44px;overflow:hidden"><div class="t" style="left:5px;top:4.81px;font-size:17px;line-height:17px;color:#111;letter-spacing:0.1px;">07 somedays.m4a</div></div>
<div class="t" style="left:463.4px;top:840.89px;font-size:17px;line-height:17px;color:#111;letter-spacing:0.12px;">10/12/2014…</div>
<div class="t" style="left:584.3000000000001px;top:840.89px;font-size:17px;line-height:17px;color:#111;letter-spacing:0.12px;">10/12/2014 16…</div>
<div class="t" style="left:723.6999999999999px;top:840.89px;font-size:17px;line-height:17px;color:#111;letter-spacing:0.25px;">Apple Mpeg-4 A…</div>
<div class="t" style="left:964.4999999999999px;top:840.89px;font-size:17px;line-height:17px;color:#111;letter-spacing:0.1px;transform:translateX(-100%);">8.6 MB</div>
<div class="a" style="left:969.9999999999999px;top:836.08px;width:464.4000000000001px;height:25.44px;overflow:hidden"><div class="t" style="left:5px;top:4.81px;font-size:17px;line-height:17px;color:#111;letter-spacing:0.23px;">/Users/giorgos/Music/iTunes/iTunes Media/Music/Audioslave/Audioslave/01.m4a</div></div>
<div class="a" style="left:0px;top:0px;width:1px;height:843px;background:#cfcfcf;"></div>
</div>
<div class="a" style="left:552px;top:44.5px;width:193px;height:1146px;border-radius:5px;background:linear-gradient(#d0dfe7 0px, #dbe4ea 50px, #e4e8ec 110px, #ebecee 250px, #efefef 500px, #f0f0f0);box-shadow:0 0 0 0.5px rgba(0,0,0,.10), 0 4px 14px rgba(0,0,0,.25);"></div>
<div class="a" style="left:552px;top:107px;width:193px;height:2.5px;background:linear-gradient(#e3e7ea,#c9cdd1 50%,#e3e7ea);"></div>
<div class="t" style="left:580.4px;top:52.02px;font-size:19px;line-height:19px;color:#1b2631;letter-spacing:0.35px;">Show All</div>
<div class="t" style="left:580.4px;top:77.42px;font-size:19px;line-height:19px;color:#1b2631;letter-spacing:0.35px;">Hide All</div>
<svg style="left:560px;top:120.5px" width="15" height="15" viewBox="0 0 15 15"><path d="M0.8 8 L5.2 13.2 Q9 4.5 14.6 0.6" stroke="#1c2530" stroke-width="2.6" fill="none" stroke-linejoin="round"/></svg>
<div class="t" style="left:580.4px;top:119.42px;font-size:19px;line-height:19px;color:#1c2530;letter-spacing:0.35px;">Icon</div>
<svg style="left:560px;top:145.943px" width="15" height="15" viewBox="0 0 15 15"><path d="M0.8 8 L5.2 13.2 Q9 4.5 14.6 0.6" stroke="#1c2530" stroke-width="2.6" fill="none" stroke-linejoin="round"/></svg>
<div class="t" style="left:580.4px;top:144.86px;font-size:19px;line-height:19px;color:#1c2530;letter-spacing:0.35px;">File Name</div>
<svg style="left:560px;top:171.386px" width="15" height="15" viewBox="0 0 15 15"><path d="M0.8 8 L5.2 13.2 Q9 4.5 14.6 0.6" stroke="#1c2530" stroke-width="2.6" fill="none" stroke-linejoin="round"/></svg>
<div class="t" style="left:580.4px;top:170.30px;font-size:19px;line-height:19px;color:#1c2530;letter-spacing:0.35px;">Date Modified</div>
<svg style="left:560px;top:196.829px" width="15" height="15" viewBox="0 0 15 15"><path d="M0.8 8 L5.2 13.2 Q9 4.5 14.6 0.6" stroke="#1c2530" stroke-width="2.6" fill="none" stroke-linejoin="round"/></svg>
<div class="t" style="left:580.4px;top:195.75px;font-size:19px;line-height:19px;color:#1c2530;letter-spacing:0.35px;">Date Created</div>
<svg style="left:560px;top:222.272px" width="15" height="15" viewBox="0 0 15 15"><path d="M0.8 8 L5.2 13.2 Q9 4.5 14.6 0.6" stroke="#1c2530" stroke-width="2.6" fill="none" stroke-linejoin="round"/></svg>
<div class="t" style="left:580.4px;top:221.19px;font-size:19px;line-height:19px;color:#1c2530;letter-spacing:0.35px;">Kind</div>
<svg style="left:560px;top:247.71500000000003px" width="15" height="15" viewBox="0 0 15 15"><path d="M0.8 8 L5.2 13.2 Q9 4.5 14.6 0.6" stroke="#1c2530" stroke-width="2.6" fill="none" stroke-linejoin="round"/></svg>
<div class="t" style="left:580.4px;top:246.63px;font-size:19px;line-height:19px;color:#1c2530;letter-spacing:0.35px;">Size</div>
<svg style="left:560px;top:273.158px" width="15" height="15" viewBox="0 0 15 15"><path d="M0.8 8 L5.2 13.2 Q9 4.5 14.6 0.6" stroke="#1c2530" stroke-width="2.6" fill="none" stroke-linejoin="round"/></svg>
<div class="t" style="left:580.4px;top:272.07px;font-size:19px;line-height:19px;color:#1c2530;letter-spacing:0.35px;">Path</div>
<svg style="left:560px;top:298.601px" width="15" height="15" viewBox="0 0 15 15"><path d="M0.8 8 L5.2 13.2 Q9 4.5 14.6 0.6" stroke="#1c2530" stroke-width="2.6" fill="none" stroke-linejoin="round"/></svg>
<div class="t" style="left:580.4px;top:297.52px;font-size:19px;line-height:19px;color:#1f2327;letter-spacing:0.35px;">Folder</div>
<svg style="left:560px;top:324.044px" width="15" height="15" viewBox="0 0 15 15"><path d="M0.8 8 L5.2 13.2 Q9 4.5 14.6 0.6" stroke="#1c2530" stroke-width="2.6" fill="none" stroke-linejoin="round"/></svg>
<div class="t" style="left:580.4px;top:322.96px;font-size:19px;line-height:19px;color:#1f2327;letter-spacing:0.35px;">Location</div>
<svg style="left:560px;top:349.487px" width="15" height="15" viewBox="0 0 15 15"><path d="M0.8 8 L5.2 13.2 Q9 4.5 14.6 0.6" stroke="#1c2530" stroke-width="2.6" fill="none" stroke-linejoin="round"/></svg>
<div class="t" style="left:580.4px;top:348.40px;font-size:19px;line-height:19px;color:#1f2327;letter-spacing:0.35px;">Comments</div>
<svg style="left:560px;top:374.93px" width="15" height="15" viewBox="0 0 15 15"><path d="M0.8 8 L5.2 13.2 Q9 4.5 14.6 0.6" stroke="#1c2530" stroke-width="2.6" fill="none" stroke-linejoin="round"/></svg>
<div class="t" style="left:580.4px;top:373.85px;font-size:19px;line-height:19px;color:#1f2327;letter-spacing:0.35px;">Description</div>
<svg style="left:560px;top:400.373px" width="15" height="15" viewBox="0 0 15 15"><path d="M0.8 8 L5.2 13.2 Q9 4.5 14.6 0.6" stroke="#1c2530" stroke-width="2.6" fill="none" stroke-linejoin="round"/></svg>
<div class="t" style="left:580.4px;top:399.29px;font-size:19px;line-height:19px;color:#1f2327;letter-spacing:0.35px;">Tags</div>
<svg style="left:560px;top:425.81600000000003px" width="15" height="15" viewBox="0 0 15 15"><path d="M0.8 8 L5.2 13.2 Q9 4.5 14.6 0.6" stroke="#1c2530" stroke-width="2.6" fill="none" stroke-linejoin="round"/></svg>
<div class="t" style="left:580.4px;top:424.73px;font-size:19px;line-height:19px;color:#1f2327;letter-spacing:0.35px;">Version</div>
<svg style="left:560px;top:451.259px" width="15" height="15" viewBox="0 0 15 15"><path d="M0.8 8 L5.2 13.2 Q9 4.5 14.6 0.6" stroke="#1c2530" stroke-width="2.6" fill="none" stroke-linejoin="round"/></svg>
<div class="t" style="left:580.4px;top:450.18px;font-size:19px;line-height:19px;color:#1f2327;letter-spacing:0.35px;">Pages</div>
<svg style="left:560px;top:476.702px" width="15" height="15" viewBox="0 0 15 15"><path d="M0.8 8 L5.2 13.2 Q9 4.5 14.6 0.6" stroke="#1c2530" stroke-width="2.6" fill="none" stroke-linejoin="round"/></svg>
<div class="t" style="left:580.4px;top:475.62px;font-size:19px;line-height:19px;color:#1f2327;letter-spacing:0.35px;">Authors</div>
<svg style="left:560px;top:502.145px" width="15" height="15" viewBox="0 0 15 15"><path d="M0.8 8 L5.2 13.2 Q9 4.5 14.6 0.6" stroke="#1c2530" stroke-width="2.6" fill="none" stroke-linejoin="round"/></svg>
<div class="t" style="left:580.4px;top:501.06px;font-size:19px;line-height:19px;color:#1f2327;letter-spacing:0.35px;">Title</div>
<svg style="left:560px;top:527.588px" width="15" height="15" viewBox="0 0 15 15"><path d="M0.8 8 L5.2 13.2 Q9 4.5 14.6 0.6" stroke="#1c2530" stroke-width="2.6" fill="none" stroke-linejoin="round"/></svg>
<div class="t" style="left:580.4px;top:526.50px;font-size:19px;line-height:19px;color:#1f2327;letter-spacing:0.35px;">Album</div>
<svg style="left:560px;top:553.031px" width="15" height="15" viewBox="0 0 15 15"><path d="M0.8 8 L5.2 13.2 Q9 4.5 14.6 0.6" stroke="#1c2530" stroke-width="2.6" fill="none" stroke-linejoin="round"/></svg>
<div class="t" style="left:580.4px;top:551.95px;font-size:19px;line-height:19px;color:#1f2327;letter-spacing:0.35px;">Track NO</div>
<svg style="left:560px;top:578.474px" width="15" height="15" viewBox="0 0 15 15"><path d="M0.8 8 L5.2 13.2 Q9 4.5 14.6 0.6" stroke="#1c2530" stroke-width="2.6" fill="none" stroke-linejoin="round"/></svg>
<div class="t" style="left:580.4px;top:577.39px;font-size:19px;line-height:19px;color:#1f2327;letter-spacing:0.35px;">Genre</div>
<svg style="left:560px;top:603.917px" width="15" height="15" viewBox="0 0 15 15"><path d="M0.8 8 L5.2 13.2 Q9 4.5 14.6 0.6" stroke="#1c2530" stroke-width="2.6" fill="none" stroke-linejoin="round"/></svg>
<div class="t" style="left:580.4px;top:602.83px;font-size:19px;line-height:19px;color:#1f2327;letter-spacing:0.35px;">Year</div>
<svg style="left:560px;top:629.36px" width="15" height="15" viewBox="0 0 15 15"><path d="M0.8 8 L5.2 13.2 Q9 4.5 14.6 0.6" stroke="#1c2530" stroke-width="2.6" fill="none" stroke-linejoin="round"/></svg>
<div class="t" style="left:580.4px;top:628.28px;font-size:19px;line-height:19px;color:#1f2327;letter-spacing:0.35px;">Duration (Sec)</div>
<svg style="left:560px;top:654.803px" width="15" height="15" viewBox="0 0 15 15"><path d="M0.8 8 L5.2 13.2 Q9 4.5 14.6 0.6" stroke="#1c2530" stroke-width="2.6" fill="none" stroke-linejoin="round"/></svg>
<div class="t" style="left:580.4px;top:653.72px;font-size:19px;line-height:19px;color:#1f2327;letter-spacing:0.35px;">Audio BitRate</div>
<svg style="left:560px;top:680.246px" width="15" height="15" viewBox="0 0 15 15"><path d="M0.8 8 L5.2 13.2 Q9 4.5 14.6 0.6" stroke="#1c2530" stroke-width="2.6" fill="none" stroke-linejoin="round"/></svg>
<div class="t" style="left:580.4px;top:679.16px;font-size:19px;line-height:19px;color:#1f2327;letter-spacing:0.35px;">Encoding App</div>
<svg style="left:560px;top:705.6890000000001px" width="15" height="15" viewBox="0 0 15 15"><path d="M0.8 8 L5.2 13.2 Q9 4.5 14.6 0.6" stroke="#1c2530" stroke-width="2.6" fill="none" stroke-linejoin="round"/></svg>
<div class="t" style="left:580.4px;top:704.61px;font-size:19px;line-height:19px;color:#1f2327;letter-spacing:0.35px;">Sample Rate</div>
<svg style="left:560px;top:731.1320000000001px" width="15" height="15" viewBox="0 0 15 15"><path d="M0.8 8 L5.2 13.2 Q9 4.5 14.6 0.6" stroke="#1c2530" stroke-width="2.6" fill="none" stroke-linejoin="round"/></svg>
<div class="t" style="left:580.4px;top:730.05px;font-size:19px;line-height:19px;color:#1f2327;letter-spacing:0.35px;">Audio Channels</div>
<svg style="left:560px;top:756.575px" width="15" height="15" viewBox="0 0 15 15"><path d="M0.8 8 L5.2 13.2 Q9 4.5 14.6 0.6" stroke="#1c2530" stroke-width="2.6" fill="none" stroke-linejoin="round"/></svg>
<div class="t" style="left:580.4px;top:755.49px;font-size:19px;line-height:19px;color:#1f2327;letter-spacing:0.35px;">Dimensions</div>
<svg style="left:560px;top:782.018px" width="15" height="15" viewBox="0 0 15 15"><path d="M0.8 8 L5.2 13.2 Q9 4.5 14.6 0.6" stroke="#1c2530" stroke-width="2.6" fill="none" stroke-linejoin="round"/></svg>
<div class="t" style="left:580.4px;top:780.93px;font-size:19px;line-height:19px;color:#1f2327;letter-spacing:0.35px;">Width</div>
<svg style="left:560px;top:807.461px" width="15" height="15" viewBox="0 0 15 15"><path d="M0.8 8 L5.2 13.2 Q9 4.5 14.6 0.6" stroke="#1c2530" stroke-width="2.6" fill="none" stroke-linejoin="round"/></svg>
<div class="t" style="left:580.4px;top:806.38px;font-size:19px;line-height:19px;color:#1f2327;letter-spacing:0.35px;">Height</div>
<svg style="left:560px;top:832.904px" width="15" height="15" viewBox="0 0 15 15"><path d="M0.8 8 L5.2 13.2 Q9 4.5 14.6 0.6" stroke="#1c2530" stroke-width="2.6" fill="none" stroke-linejoin="round"/></svg>
<div class="t" style="left:580.4px;top:831.82px;font-size:19px;line-height:19px;color:#1f2327;letter-spacing:0.35px;">Total Pixels</div>
<svg style="left:560px;top:858.3470000000001px" width="15" height="15" viewBox="0 0 15 15"><path d="M0.8 8 L5.2 13.2 Q9 4.5 14.6 0.6" stroke="#1c2530" stroke-width="2.6" fill="none" stroke-linejoin="round"/></svg>
<div class="t" style="left:580.4px;top:857.26px;font-size:19px;line-height:19px;color:#1f2327;letter-spacing:0.35px;">Height DPI</div>
<svg style="left:560px;top:883.7900000000001px" width="15" height="15" viewBox="0 0 15 15"><path d="M0.8 8 L5.2 13.2 Q9 4.5 14.6 0.6" stroke="#1c2530" stroke-width="2.6" fill="none" stroke-linejoin="round"/></svg>
<div class="t" style="left:580.4px;top:882.71px;font-size:19px;line-height:19px;color:#1f2327;letter-spacing:0.35px;">Width DPI</div>
<svg style="left:560px;top:909.2330000000001px" width="15" height="15" viewBox="0 0 15 15"><path d="M0.8 8 L5.2 13.2 Q9 4.5 14.6 0.6" stroke="#1c2530" stroke-width="2.6" fill="none" stroke-linejoin="round"/></svg>
<div class="t" style="left:580.4px;top:908.15px;font-size:19px;line-height:19px;color:#1f2327;letter-spacing:0.35px;">Color Space</div>
<svg style="left:560px;top:934.676px" width="15" height="15" viewBox="0 0 15 15"><path d="M0.8 8 L5.2 13.2 Q9 4.5 14.6 0.6" stroke="#1c2530" stroke-width="2.6" fill="none" stroke-linejoin="round"/></svg>
<div class="t" style="left:580.4px;top:933.59px;font-size:19px;line-height:19px;color:#1f2327;letter-spacing:0.35px;">Color Profile</div>
<svg style="left:560px;top:960.119px" width="15" height="15" viewBox="0 0 15 15"><path d="M0.8 8 L5.2 13.2 Q9 4.5 14.6 0.6" stroke="#1c2530" stroke-width="2.6" fill="none" stroke-linejoin="round"/></svg>
<div class="t" style="left:580.4px;top:959.04px;font-size:19px;line-height:19px;color:#1f2327;letter-spacing:0.35px;">Alpha Channel</div>
<svg style="left:560px;top:985.562px" width="15" height="15" viewBox="0 0 15 15"><path d="M0.8 8 L5.2 13.2 Q9 4.5 14.6 0.6" stroke="#1c2530" stroke-width="2.6" fill="none" stroke-linejoin="round"/></svg>
<div class="t" style="left:580.4px;top:984.48px;font-size:19px;line-height:19px;color:#1f2327;letter-spacing:0.35px;">Creator</div>
<svg style="left:560px;top:1011.0050000000001px" width="15" height="15" viewBox="0 0 15 15"><path d="M0.8 8 L5.2 13.2 Q9 4.5 14.6 0.6" stroke="#1c2530" stroke-width="2.6" fill="none" stroke-linejoin="round"/></svg>
<div class="t" style="left:580.4px;top:1009.92px;font-size:19px;line-height:19px;color:#1f2327;letter-spacing:0.35px;">Owner</div>
<svg style="left:560px;top:1036.448px" width="15" height="15" viewBox="0 0 15 15"><path d="M0.8 8 L5.2 13.2 Q9 4.5 14.6 0.6" stroke="#1c2530" stroke-width="2.6" fill="none" stroke-linejoin="round"/></svg>
<div class="t" style="left:580.4px;top:1035.36px;font-size:19px;line-height:19px;color:#1f2327;letter-spacing:0.35px;">Total BitRate</div>
<svg style="left:560px;top:1061.891px" width="15" height="15" viewBox="0 0 15 15"><path d="M0.8 8 L5.2 13.2 Q9 4.5 14.6 0.6" stroke="#1c2530" stroke-width="2.6" fill="none" stroke-linejoin="round"/></svg>
<div class="t" style="left:580.4px;top:1060.81px;font-size:19px;line-height:19px;color:#1f2327;letter-spacing:0.35px;">Codecs</div>
<svg style="left:560px;top:1087.334px" width="15" height="15" viewBox="0 0 15 15"><path d="M0.8 8 L5.2 13.2 Q9 4.5 14.6 0.6" stroke="#1c2530" stroke-width="2.6" fill="none" stroke-linejoin="round"/></svg>
<div class="t" style="left:580.4px;top:1086.25px;font-size:19px;line-height:19px;color:#1f2327;letter-spacing:0.35px;">Level</div>
<svg style="left:560px;top:1112.777px" width="15" height="15" viewBox="0 0 15 15"><path d="M0.8 8 L5.2 13.2 Q9 4.5 14.6 0.6" stroke="#1c2530" stroke-width="2.6" fill="none" stroke-linejoin="round"/></svg>
<div class="t" style="left:580.4px;top:1111.69px;font-size:19px;line-height:19px;color:#1f2327;letter-spacing:0.35px;">Date Added</div>
<svg style="left:560px;top:1138.22px" width="15" height="15" viewBox="0 0 15 15"><path d="M0.8 8 L5.2 13.2 Q9 4.5 14.6 0.6" stroke="#1c2530" stroke-width="2.6" fill="none" stroke-linejoin="round"/></svg>
<div class="t" style="left:580.4px;top:1137.14px;font-size:19px;line-height:19px;color:#1f2327;letter-spacing:0.35px;">MD5</div>
<svg style="left:560px;top:1163.663px" width="15" height="15" viewBox="0 0 15 15"><path d="M0.8 8 L5.2 13.2 Q9 4.5 14.6 0.6" stroke="#1c2530" stroke-width="2.6" fill="none" stroke-linejoin="round"/></svg>
<div class="t" style="left:580.4px;top:1162.58px;font-size:19px;line-height:19px;color:#1f2327;letter-spacing:0.35px;">SHA256</div>
<div class="a" style="left:0px;top:928.5px;width:1929px;height:278px;background:rgba(0,3,22,.86);"></div>
<div class="t" style="left:965px;top:987.18px;font-size:65px;line-height:65px;color:#d9d9d9;transform:translateX(-50%);-webkit-text-stroke:4.5px #03050c;paint-order:stroke fill;text-shadow:0 1px 2px rgba(0,0,0,.5);">Preview and export 42 metadata</div>
<div class="t" style="left:967.5px;top:1063.48px;font-size:65px;line-height:65px;color:#d9d9d9;letter-spacing:0.25px;transform:translateX(-50%);-webkit-text-stroke:4.5px #03050c;paint-order:stroke fill;text-shadow:0 1px 2px rgba(0,0,0,.5);">columns for every file</div>
<div class="a" style="left:0px;top:0px;width:1.5px;height:1206px;background:#fff;"></div>
<div class="a" style="left:0px;top:1204px;width:1929px;height:2px;background:#fff;"></div></body></html>
